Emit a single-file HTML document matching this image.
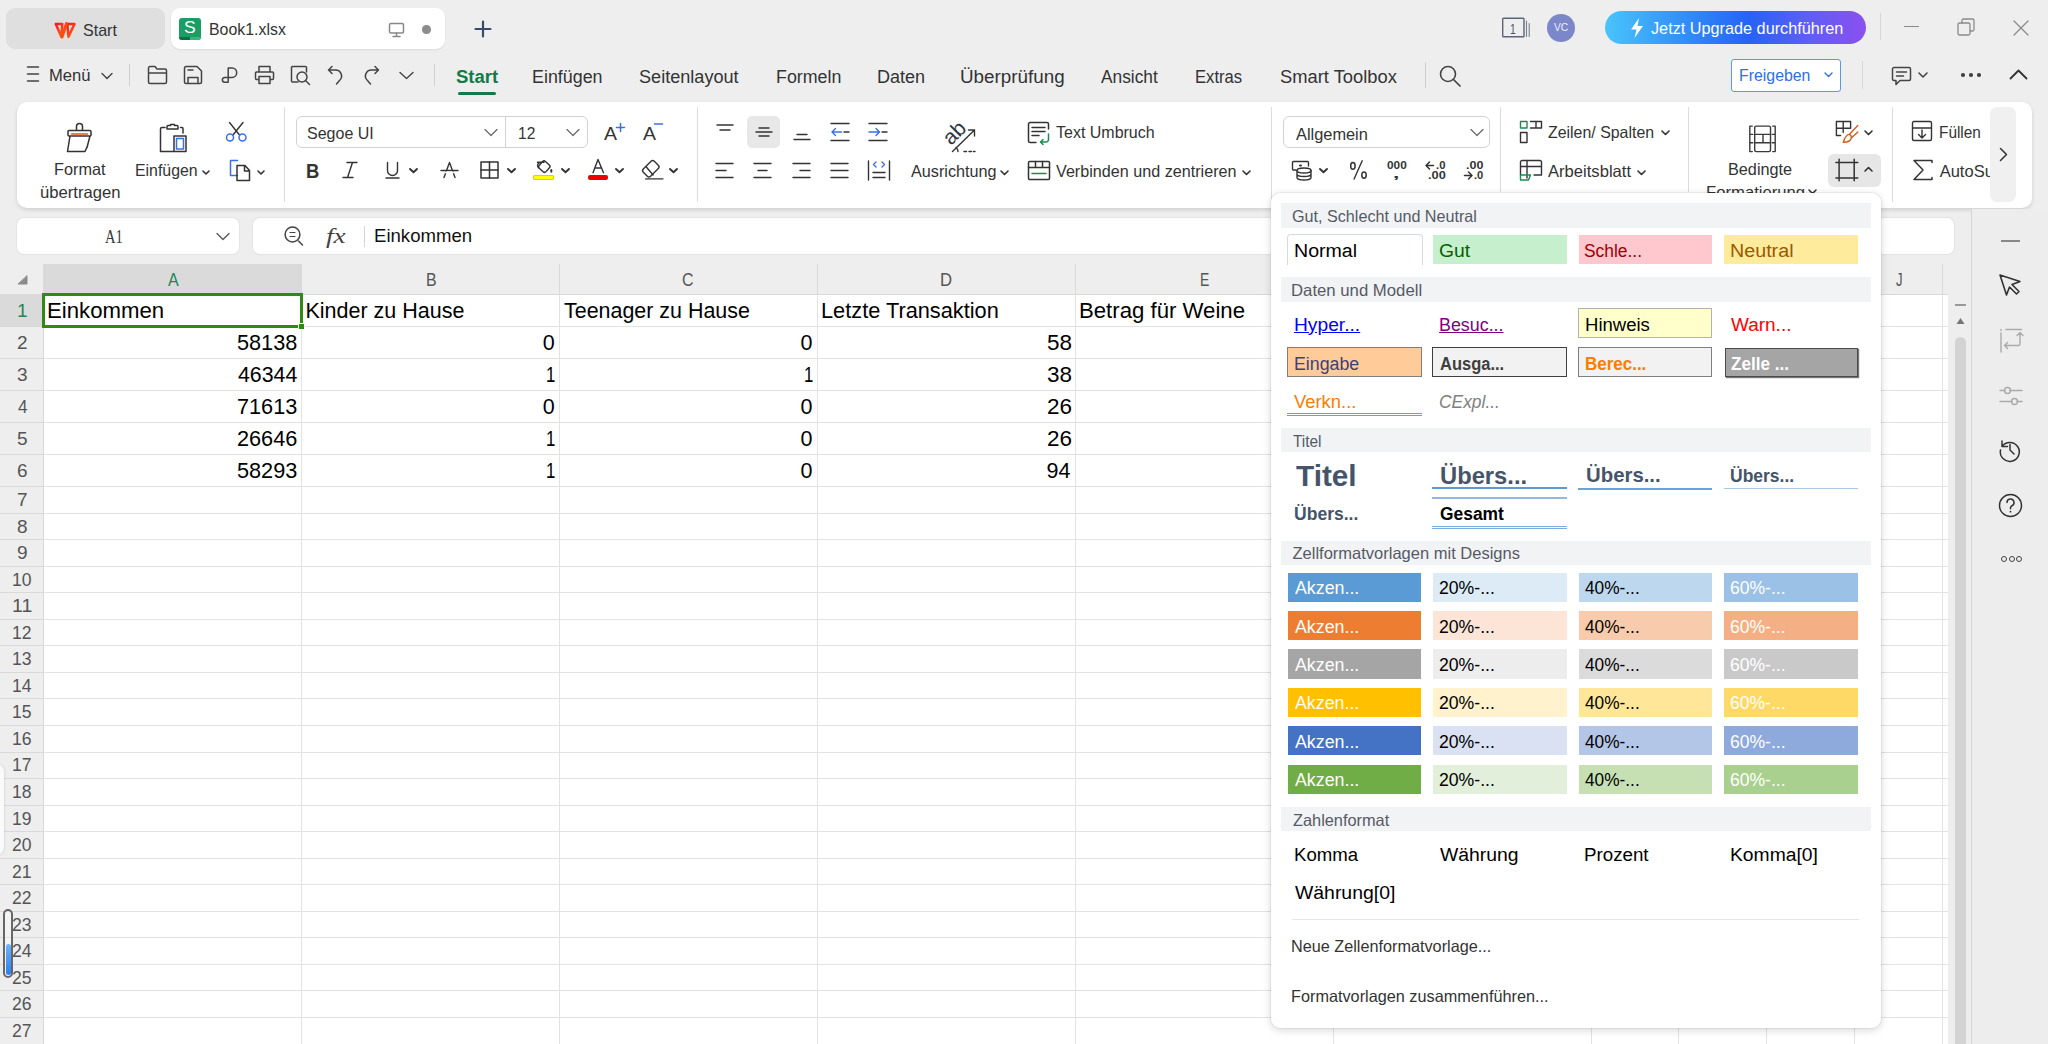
<!DOCTYPE html>
<html><head><meta charset="utf-8"><style>
html,body{margin:0;padding:0;width:2048px;height:1044px;overflow:hidden;background:#eeeeee;position:relative;font-family:"Liberation Sans",sans-serif;}
.t{position:absolute;white-space:nowrap;line-height:1;transform-origin:0 0;}
svg{overflow:visible}
</style></head><body>
<div style="position:absolute;left:6px;top:8px;width:159px;height:41px;background:#dfdfdf;border-radius:9px;"></div>
<svg style="position:absolute;left:53px;top:21px" width="25" height="19" viewBox="0 0 25 19">
<defs><linearGradient id="wg" x1="0" y1="0" x2="0.6" y2="1"><stop offset="0" stop-color="#ff1620"/><stop offset="1" stop-color="#ff5a10"/></linearGradient>
<linearGradient id="wg2" x1="0" y1="0" x2="1" y2="0"><stop offset="0" stop-color="#ff7a10"/><stop offset="0.5" stop-color="#c8240e"/><stop offset="1" stop-color="#ff3a18"/></linearGradient></defs>
<path d="M2.8 3 H9.3 L8.3 15.8 Z" fill="none" stroke="url(#wg)" stroke-width="2.5" stroke-linejoin="round"/>
<path d="M14.3 3 H21.5 L15.5 15.8 Z" fill="none" stroke="url(#wg)" stroke-width="2.5" stroke-linejoin="round"/>
<path d="M13.5 2.5 L9 16" stroke="#ff4a12" stroke-width="3" stroke-linecap="round"/>
<path d="M14.3 3 H21.5" stroke="url(#wg2)" stroke-width="3" stroke-linecap="round"/>
</svg>
<span id="t0" class="t" style="left:83.06px;top:21.91px;font-size:17px;color:#333;font-weight:normal;font-style:normal;font-family:'Liberation Sans', sans-serif;transform:scaleX(0.9429);">Start</span>
<div style="position:absolute;left:171px;top:8px;width:274px;height:41px;background:#ffffff;border-radius:9px;box-shadow:0 1px 2px rgba(0,0,0,0.08);"></div>
<div style="position:absolute;left:179px;top:18px;width:22px;height:22px;background:#1b9e63;border-radius:3px;"></div>
<div style="position:absolute;left:179px;top:37px;width:11px;height:3px;background:#0e7145;border-radius:0 0 0 3px;"></div>
<div style="position:absolute;left:190px;top:37px;width:11px;height:3px;background:#3ab57c;border-radius:0 0 3px 0;"></div>
<span id="t1" class="t" style="left:184.47px;top:18.91px;font-size:17px;color:#ffffff;font-weight:normal;font-style:normal;font-family:'Liberation Sans', sans-serif;transform:scaleX(1.0300);">S</span>
<span id="t2" class="t" style="left:208.87px;top:21.11px;font-size:17px;color:#333;font-weight:normal;font-style:normal;font-family:'Liberation Sans', sans-serif;transform:scaleX(0.9346);">Book1.xlsx</span>
<svg style="position:absolute;left:388px;top:22px;" width="18" height="16" viewBox="0 0 18 16" fill="none" stroke="#333" stroke-width="1.5" stroke-linecap="round" stroke-linejoin="round"><rect x="1.5" y="1.5" width="14" height="9.5" rx="1.5" stroke="#888"/><path d="M8.5 11v3.5M5 14.5h7" stroke="#888"/></svg>
<div style="position:absolute;left:422px;top:25px;width:8.5px;height:8.5px;background:#8c8c8c;border-radius:50%;"></div>
<svg style="position:absolute;left:474px;top:20px;" width="18" height="18" viewBox="0 0 18 18" fill="none" stroke="#333" stroke-width="1.5" stroke-linecap="round" stroke-linejoin="round"><path d="M9 1.5v15M1.5 9h15" stroke="#3b4a6b" stroke-width="2.2"/></svg>
<svg style="position:absolute;left:1501px;top:17px;" width="31" height="21" viewBox="0 0 31 21" fill="none" stroke="#333" stroke-width="1.5" stroke-linecap="round" stroke-linejoin="round"><rect x="1.7" y="1.2" width="21.3" height="18.6" rx="0.8" stroke="#5b6478" stroke-width="1.4"/><path d="M25.5 4v15.5M28.2 6.5v13" stroke="#7a8290" stroke-width="1.1"/></svg>
<span id="t3" class="t" style="left:1510.11px;top:20.50px;font-size:15px;color:#4a5263;font-weight:normal;font-style:normal;font-family:'Liberation Sans', sans-serif;transform:scaleX(0.6857);">1</span>
<div style="position:absolute;left:1547px;top:13.5px;width:28px;height:28px;background:#7b87c8;border-radius:50%;"></div>
<span id="t4" class="t" style="left:1554.00px;top:21.69px;font-size:11px;color:#eef;font-weight:normal;font-style:normal;font-family:'Liberation Sans', sans-serif;transform:scaleX(0.9333);">VC</span>
<div style="position:absolute;left:1605px;top:11px;width:261px;height:33px;background:linear-gradient(90deg,#49c4fb 0%,#2f86f8 35%,#2563f5 55%,#5f5ef3 78%,#8b50f0 100%);border-radius:17px;"></div>
<svg style="position:absolute;left:1628px;top:17px;" width="18" height="22" viewBox="0 0 18 22" fill="none" stroke="#333" stroke-width="1.5" stroke-linecap="round" stroke-linejoin="round"><path d="M11 1 L3 12.5 L8.5 12.5 L6.5 21 L15 9 L9.5 9 Z" fill="#fff" stroke="none"/></svg>
<span id="t5" class="t" style="left:1650.80px;top:19.61px;font-size:17px;color:#ffffff;font-weight:normal;font-style:normal;font-family:'Liberation Sans', sans-serif;transform:scaleX(0.9552);">Jetzt Upgrade durchführen</span>
<div style="position:absolute;left:1880px;top:13px;width:1px;height:27px;background:#d6d6d6;"></div>
<div style="position:absolute;left:1904px;top:26.2px;width:15px;height:1.3px;background:#8a8a8a;"></div>
<svg style="position:absolute;left:1957px;top:18px;" width="19" height="19" viewBox="0 0 19 19" fill="none" stroke="#333" stroke-width="1.5" stroke-linecap="round" stroke-linejoin="round"><rect x="1" y="5" width="12" height="12" rx="1.5" stroke="#8a8a8a" stroke-width="1.3"/><path d="M5 5V2.5A1.5 1.5 0 0 1 6.5 1h9A1.5 1.5 0 0 1 17 2.5v9a1.5 1.5 0 0 1-1.5 1.5H13" stroke="#8a8a8a" stroke-width="1.3"/></svg>
<svg style="position:absolute;left:2013px;top:20px;" width="16" height="16" viewBox="0 0 16 16" fill="none" stroke="#333" stroke-width="1.5" stroke-linecap="round" stroke-linejoin="round"><path d="M1 1L15 15M15 1L1 15" stroke="#8a8a8a" stroke-width="1.3"/></svg>
<svg style="position:absolute;left:26px;top:65px;" width="14" height="18" viewBox="0 0 14 18" fill="none" stroke="#333" stroke-width="1.5" stroke-linecap="round" stroke-linejoin="round"><path d="M1.5 2h11M1.5 9h11M1.5 16h11" stroke="#444" stroke-width="1.5"/></svg>
<span id="t6" class="t" style="left:49.02px;top:66.81px;font-size:17px;color:#333;font-weight:normal;font-style:normal;font-family:'Liberation Sans', sans-serif;transform:scaleX(0.9756);">Menü</span>
<svg style="position:absolute;left:101px;top:72px;" width="12" height="8" viewBox="0 0 12 8" fill="none" stroke="#333" stroke-width="1.5" stroke-linecap="round" stroke-linejoin="round"><path d="M1 1.5L6 6.5L11 1.5" stroke="#444" stroke-width="1.4"/></svg>
<div style="position:absolute;left:129px;top:64px;width:1px;height:22px;background:#d0d0d0;"></div>
<svg style="position:absolute;left:147px;top:65px;" width="21" height="20" viewBox="0 0 21 20" fill="none" stroke="#333" stroke-width="1.5" stroke-linecap="round" stroke-linejoin="round"><path d="M1.5 3A1.5 1.5 0 0 1 3 1.5h5l2 2.5h8A1.5 1.5 0 0 1 19.5 5.5V17A1.5 1.5 0 0 1 18 18.5H3A1.5 1.5 0 0 1 1.5 17Z M1.5 8h18" stroke="#444"/></svg>
<svg style="position:absolute;left:183px;top:65px;" width="20" height="20" viewBox="0 0 20 20" fill="none" stroke="#333" stroke-width="1.5" stroke-linecap="round" stroke-linejoin="round"><path d="M1.5 3A1.5 1.5 0 0 1 3 1.5h11l4.5 4.5V17a1.5 1.5 0 0 1-1.5 1.5H3A1.5 1.5 0 0 1 1.5 17Z M5 5h5 M5 18.5v-6h10v6" stroke="#444"/></svg>
<svg style="position:absolute;left:221px;top:65px;" width="17" height="20" viewBox="0 0 17 20" fill="none" stroke="#333" stroke-width="1.5" stroke-linecap="round" stroke-linejoin="round"><path d="M7.2 17.3V3H11A4.7 4.7 0 0 1 11 12.4H3.8A2.45 2.45 0 0 0 3.8 17.3H7.2" stroke="#444" stroke-width="1.5"/></svg>
<svg style="position:absolute;left:254px;top:65px;" width="21" height="20" viewBox="0 0 21 20" fill="none" stroke="#333" stroke-width="1.5" stroke-linecap="round" stroke-linejoin="round"><path d="M5 7V1.5h11V7 M5 14.5H2.5A1 1 0 0 1 1.5 13.5V8A1 1 0 0 1 2.5 7h16A1 1 0 0 1 19.5 8v5.5a1 1 0 0 1-1 1H16 M5 11.5h11v7H5Z" stroke="#444"/></svg>
<svg style="position:absolute;left:290px;top:65px;" width="21" height="21" viewBox="0 0 21 21" fill="none" stroke="#333" stroke-width="1.5" stroke-linecap="round" stroke-linejoin="round"><path d="M8 17H2.5A1 1 0 0 1 1.5 16V2.5A1 1 0 0 1 2.5 1.5h13a1 1 0 0 1 1 1V7" stroke="#444"/><circle cx="12" cy="12" r="5" stroke="#444"/><path d="M15.5 15.5L19.5 19.5" stroke="#444"/></svg>
<svg style="position:absolute;left:327px;top:65px;" width="16" height="20" viewBox="0 0 16 20" fill="none" stroke="#333" stroke-width="1.5" stroke-linecap="round" stroke-linejoin="round"><path d="M5 1.5L1.5 5L5 8.5 M1.5 5h7a6 6 0 0 1 4 10.5L9.5 19" stroke="#444"/></svg>
<svg style="position:absolute;left:364px;top:65px;" width="16" height="20" viewBox="0 0 16 20" fill="none" stroke="#333" stroke-width="1.5" stroke-linecap="round" stroke-linejoin="round"><path d="M11 1.5L14.5 5L11 8.5 M14.5 5h-7a6 6 0 0 0-4 10.5L6.5 19" stroke="#444"/></svg>
<svg style="position:absolute;left:399px;top:71px;" width="15" height="9" viewBox="0 0 15 9" fill="none" stroke="#333" stroke-width="1.5" stroke-linecap="round" stroke-linejoin="round"><path d="M1 1.5L7.5 7.5L14 1.5" stroke="#444" stroke-width="1.4"/></svg>
<div style="position:absolute;left:434px;top:64px;width:1px;height:22px;background:#d0d0d0;"></div>
<span id="t7" class="t" style="left:455.90px;top:69.19px;font-size:17.5px;color:#137b4a;font-weight:bold;font-style:normal;font-family:'Liberation Sans', sans-serif;transform:scaleX(1.0575);">Start</span>
<div style="position:absolute;left:458px;top:91.5px;width:38px;height:3px;background:#137b4a;border-radius:2px;"></div>
<span id="t8" class="t" style="left:531.78px;top:69.19px;font-size:17.5px;color:#333;font-weight:normal;font-style:normal;font-family:'Liberation Sans', sans-serif;transform:scaleX(1.0209);">Einfügen</span>
<span id="t9" class="t" style="left:639.27px;top:69.19px;font-size:17.5px;color:#333;font-weight:normal;font-style:normal;font-family:'Liberation Sans', sans-serif;transform:scaleX(1.0344);">Seitenlayout</span>
<span id="t10" class="t" style="left:776.48px;top:69.19px;font-size:17.5px;color:#333;font-weight:normal;font-style:normal;font-family:'Liberation Sans', sans-serif;transform:scaleX(1.0190);">Formeln</span>
<span id="t11" class="t" style="left:876.77px;top:69.19px;font-size:17.5px;color:#333;font-weight:normal;font-style:normal;font-family:'Liberation Sans', sans-serif;transform:scaleX(1.0311);">Daten</span>
<span id="t12" class="t" style="left:959.72px;top:69.19px;font-size:17.5px;color:#333;font-weight:normal;font-style:normal;font-family:'Liberation Sans', sans-serif;transform:scaleX(1.0758);">Überprüfung</span>
<span id="t13" class="t" style="left:1101.00px;top:69.19px;font-size:17.5px;color:#333;font-weight:normal;font-style:normal;font-family:'Liberation Sans', sans-serif;transform:scaleX(0.9897);">Ansicht</span>
<span id="t14" class="t" style="left:1195.45px;top:69.19px;font-size:17.5px;color:#333;font-weight:normal;font-style:normal;font-family:'Liberation Sans', sans-serif;transform:scaleX(0.9500);">Extras</span>
<span id="t15" class="t" style="left:1279.95px;top:69.19px;font-size:17.5px;color:#333;font-weight:normal;font-style:normal;font-family:'Liberation Sans', sans-serif;transform:scaleX(1.0482);">Smart Toolbox</span>
<div style="position:absolute;left:1425px;top:62px;width:1px;height:26px;background:#d0d0d0;"></div>
<svg style="position:absolute;left:1439px;top:65px;" width="23" height="22" viewBox="0 0 23 22" fill="none" stroke="#333" stroke-width="1.5" stroke-linecap="round" stroke-linejoin="round"><circle cx="9" cy="9" r="7.5" stroke="#444" stroke-width="1.6"/><path d="M14.5 14.5L21 21" stroke="#444" stroke-width="1.7"/></svg>
<div style="position:absolute;left:1731px;top:58.5px;width:110px;height:33px;background:#fff;border:1.5px solid #5b96f2;border-radius:3px;box-sizing:border-box;"></div>
<span id="t16" class="t" style="left:1739.07px;top:67.11px;font-size:17px;color:#2f6fe6;font-weight:normal;font-style:normal;font-family:'Liberation Sans', sans-serif;transform:scaleX(0.9333);">Freigeben</span>
<svg style="position:absolute;left:1824px;top:72px;" width="9" height="6" viewBox="0 0 9 6" fill="none" stroke="#333" stroke-width="1.5" stroke-linecap="round" stroke-linejoin="round"><path d="M1 1L4.5 4.5L8 1" stroke="#2f6fe6" stroke-width="1.4"/></svg>
<div style="position:absolute;left:1862px;top:61px;width:1px;height:28px;background:#d6d6d6;"></div>
<svg style="position:absolute;left:1891px;top:66px;" width="21" height="20" viewBox="0 0 21 20" fill="none" stroke="#333" stroke-width="1.5" stroke-linecap="round" stroke-linejoin="round"><path d="M3 1.5h15A1.5 1.5 0 0 1 19.5 3v10A1.5 1.5 0 0 1 18 14.5h-9l-4 4v-4H3A1.5 1.5 0 0 1 1.5 13V3A1.5 1.5 0 0 1 3 1.5Z M5.5 6h10M5.5 10h7" stroke="#444" stroke-width="1.5"/></svg>
<svg style="position:absolute;left:1918px;top:72px;" width="10" height="7" viewBox="0 0 10 7" fill="none" stroke="#333" stroke-width="1.5" stroke-linecap="round" stroke-linejoin="round"><path d="M1 1L5 5L9 1" stroke="#444" stroke-width="1.6"/></svg>
<div style="position:absolute;left:1961px;top:73px;width:3.5px;height:3.5px;background:#444;border-radius:50%;"></div>
<div style="position:absolute;left:1969px;top:73px;width:3.5px;height:3.5px;background:#444;border-radius:50%;"></div>
<div style="position:absolute;left:1977px;top:73px;width:3.5px;height:3.5px;background:#444;border-radius:50%;"></div>
<svg style="position:absolute;left:2009px;top:69px;" width="19" height="11" viewBox="0 0 19 11" fill="none" stroke="#333" stroke-width="1.5" stroke-linecap="round" stroke-linejoin="round"><path d="M1.5 9.5L9.5 1.5L17.5 9.5" stroke="#333" stroke-width="1.8"/></svg>
<div style="position:absolute;left:17px;top:101.5px;width:2015px;height:106px;background:#fff;border-radius:10px;box-shadow:0 2px 4px rgba(0,0,0,0.13);"></div>
<svg style="position:absolute;left:66px;top:123px;" width="27" height="30" viewBox="0 0 27 30" fill="none" stroke="#333" stroke-width="1.5" stroke-linecap="round" stroke-linejoin="round"><path d="M10.5 7.5V3.5a3 3 0 0 1 6 0v4 M3 7.5h21a1 1 0 0 1 1 1V12a1 1 0 0 1-1 1H3a1 1 0 0 1-1-1V8.5a1 1 0 0 1 1-1Z M4 13L1.5 28.5h17.5l2-4.5 M24 13l-3 11.5" stroke="#333" stroke-width="1.5"/><path d="M5.5 11h16" stroke="#e0581e" stroke-width="1.5"/></svg>
<span id="t17" class="t" style="left:53.51px;top:160.83px;font-size:16.5px;color:#333;font-weight:normal;font-style:normal;font-family:'Liberation Sans', sans-serif;transform:scaleX(0.9865);">Format</span>
<span id="t18" class="t" style="left:39.69px;top:183.53px;font-size:16.5px;color:#333;font-weight:normal;font-style:normal;font-family:'Liberation Sans', sans-serif;transform:scaleX(1.0090);">übertragen</span>
<svg style="position:absolute;left:159px;top:123px;" width="29" height="30" viewBox="0 0 29 30" fill="none" stroke="#333" stroke-width="1.5" stroke-linecap="round" stroke-linejoin="round"><path d="M6 4.5H3a1.5 1.5 0 0 0-1.5 1.5v22.5h13 M21.5 4.5H23a1 1 0 0 1 1 1V10 M8 6V3.5a1 1 0 0 1 1-1h2.5V1.5h4v1h2.5a1 1 0 0 1 1 1V6Z M15 28.5V13h12v15.5Z" stroke="#333" stroke-width="1.5"/><path d="M17.5 15.5h7v10.5h-7Z" stroke="#3b6fe6" stroke-width="1.5"/></svg>
<span id="t19" class="t" style="left:134.54px;top:162.33px;font-size:16.5px;color:#333;font-weight:normal;font-style:normal;font-family:'Liberation Sans', sans-serif;transform:scaleX(0.9609);">Einfügen</span>
<svg style="position:absolute;left:202px;top:170px;" width="8" height="6" viewBox="0 0 8 6" fill="none" stroke="#333" stroke-width="1.5" stroke-linecap="round" stroke-linejoin="round"><path d="M1 1L4 4L7 1" stroke="#333" stroke-width="1.6"/></svg>
<svg style="position:absolute;left:225px;top:121px;" width="23" height="21" viewBox="0 0 23 21" fill="none" stroke="#333" stroke-width="1.5" stroke-linecap="round" stroke-linejoin="round"><path d="M4.5 1.5L14.5 14 M18 1.5L8 14" stroke="#333" stroke-width="1.4"/><circle cx="5" cy="16.5" r="3.5" stroke="#3b6fe6" stroke-width="1.5"/><circle cx="17.5" cy="16.5" r="3.5" stroke="#3b6fe6" stroke-width="1.5"/></svg>
<svg style="position:absolute;left:228px;top:159px;" width="23" height="23" viewBox="0 0 23 23" fill="none" stroke="#333" stroke-width="1.5" stroke-linecap="round" stroke-linejoin="round"><path d="M9.5 1.5h-7v15h7" stroke="#3b6fe6" stroke-width="1.5"/><path d="M9 6.5h8l4.5 5v10H9Z M16.5 6.5v5.5h5" stroke="#333" stroke-width="1.5"/></svg>
<svg style="position:absolute;left:257px;top:170px;" width="8" height="6" viewBox="0 0 8 6" fill="none" stroke="#333" stroke-width="1.5" stroke-linecap="round" stroke-linejoin="round"><path d="M1 1L4 4L7 1" stroke="#333" stroke-width="1.6"/></svg>
<div style="position:absolute;left:284px;top:107px;width:1px;height:95px;background:#dcdcdc;"></div>
<div style="position:absolute;left:296px;top:115.5px;width:292px;height:32px;border:1px solid #d3d3d3;border-radius:6px;box-sizing:border-box;background:#fff;"></div>
<div style="position:absolute;left:504.5px;top:116px;width:1px;height:31px;background:#d3d3d3;"></div>
<span id="t20" class="t" style="left:306.73px;top:125.23px;font-size:16.5px;color:#333;font-weight:normal;font-style:normal;font-family:'Liberation Sans', sans-serif;transform:scaleX(0.9701);">Segoe UI</span>
<svg style="position:absolute;left:484px;top:128px;" width="14" height="9" viewBox="0 0 14 9" fill="none" stroke="#333" stroke-width="1.5" stroke-linecap="round" stroke-linejoin="round"><path d="M1 1.5L7 7.5L13 1.5" stroke="#666" stroke-width="1.2"/></svg>
<span id="t21" class="t" style="left:518.06px;top:125.23px;font-size:16.5px;color:#333;font-weight:normal;font-style:normal;font-family:'Liberation Sans', sans-serif;transform:scaleX(0.9412);">12</span>
<svg style="position:absolute;left:566px;top:128px;" width="14" height="9" viewBox="0 0 14 9" fill="none" stroke="#333" stroke-width="1.5" stroke-linecap="round" stroke-linejoin="round"><path d="M1 1.5L7 7.5L13 1.5" stroke="#666" stroke-width="1.2"/></svg>
<span id="t22" class="t" style="left:604.00px;top:124.76px;font-size:18px;color:#333;font-weight:normal;font-style:normal;font-family:'Liberation Sans', sans-serif;transform:scaleX(1.0833);">A</span>
<svg style="position:absolute;left:616px;top:123px;" width="9" height="9" viewBox="0 0 9 9" fill="none" stroke="#333" stroke-width="1.5" stroke-linecap="round" stroke-linejoin="round"><path d="M4.5 0.5v8M0.5 4.5h8" stroke="#3b6fe6" stroke-width="1.5"/></svg>
<span id="t23" class="t" style="left:643.00px;top:124.76px;font-size:18px;color:#333;font-weight:normal;font-style:normal;font-family:'Liberation Sans', sans-serif;transform:scaleX(1.0833);">A</span>
<svg style="position:absolute;left:654px;top:123px;" width="9" height="3" viewBox="0 0 9 3" fill="none" stroke="#333" stroke-width="1.5" stroke-linecap="round" stroke-linejoin="round"><path d="M0.5 1h8" stroke="#3b6fe6" stroke-width="1.5"/></svg>
<span id="t24" class="t" style="left:305.82px;top:159.72px;font-size:21px;color:#333;font-weight:bold;font-style:normal;font-family:'Liberation Sans', sans-serif;transform:scaleX(0.8786);">B</span>
<svg style="position:absolute;left:341px;top:161px;" width="18" height="18" viewBox="0 0 18 18" fill="none" stroke="#333" stroke-width="1.5" stroke-linecap="round" stroke-linejoin="round"><path d="M6 1.5h10 M2 16.5h10 M11.5 1.5L6.5 16.5" stroke="#333" stroke-width="1.4"/></svg>
<svg style="position:absolute;left:385px;top:161px;" width="15" height="18" viewBox="0 0 15 18" fill="none" stroke="#333" stroke-width="1.5" stroke-linecap="round" stroke-linejoin="round"><path d="M2.5 1.5v8a5 5 0 0 0 10 0v-8 M1 17h13" stroke="#333" stroke-width="1.4"/></svg>
<svg style="position:absolute;left:409px;top:167.8px;" width="9" height="6" viewBox="0 0 9 6" fill="none" stroke="#333" stroke-width="1.5" stroke-linecap="round" stroke-linejoin="round"><path d="M1 1L4.5 4.3L8 1" stroke="#333" stroke-width="1.9"/></svg>
<svg style="position:absolute;left:440px;top:161px;" width="19" height="18" viewBox="0 0 19 18" fill="none" stroke="#333" stroke-width="1.5" stroke-linecap="round" stroke-linejoin="round"><path d="M4 16.5L9.5 1.5L15 16.5 M1 9.5h17" stroke="#333" stroke-width="1.4"/><path d="M6 11.5h7" stroke="#fff" stroke-width="2"/></svg>
<svg style="position:absolute;left:480px;top:161px;" width="19" height="18" viewBox="0 0 19 18" fill="none" stroke="#333" stroke-width="1.5" stroke-linecap="round" stroke-linejoin="round"><rect x="1" y="1" width="17" height="16" stroke="#333" stroke-width="1.5"/><path d="M9.5 1v16M1 9h17" stroke="#333" stroke-width="1.5"/></svg>
<svg style="position:absolute;left:507px;top:167.8px;" width="9" height="6" viewBox="0 0 9 6" fill="none" stroke="#333" stroke-width="1.5" stroke-linecap="round" stroke-linejoin="round"><path d="M1 1L4.5 4.3L8 1" stroke="#333" stroke-width="1.9"/></svg>
<svg style="position:absolute;left:533px;top:157px;" width="22" height="17" viewBox="0 0 22 17" fill="none" stroke="#333" stroke-width="1.5" stroke-linecap="round" stroke-linejoin="round"><rect x="-4.6" y="-4.6" width="9.2" height="9.2" rx="2" transform="translate(11.3 9.6) rotate(42)" stroke="#333" stroke-width="1.4"/><path d="M4.5 5.3H11 M6.8 5.3C4.3 6.6 3.9 9.2 5.6 10.8" stroke="#333" stroke-width="1.4"/><ellipse cx="18.3" cy="13.8" rx="1.1" ry="1.9" fill="#333" stroke="none"/></svg>
<div style="position:absolute;left:533.2px;top:175px;width:20.7px;height:4.7px;background:#ffff00;border-radius:2px;box-shadow:inset 0 0 0 0.8px #c9c900;"></div>
<svg style="position:absolute;left:561px;top:167.8px;" width="9" height="6" viewBox="0 0 9 6" fill="none" stroke="#333" stroke-width="1.5" stroke-linecap="round" stroke-linejoin="round"><path d="M1 1L4.5 4.3L8 1" stroke="#333" stroke-width="1.9"/></svg>
<svg style="position:absolute;left:589px;top:158px;" width="18" height="16" viewBox="0 0 18 16" fill="none" stroke="#333" stroke-width="1.5" stroke-linecap="round" stroke-linejoin="round"><path d="M4 14.7L9 1.4L14.5 14.7 M6.4 10H12.1" stroke="#333" stroke-width="1.4"/></svg>
<div style="position:absolute;left:587.5px;top:175px;width:20.3px;height:4.7px;background:#ee0000;border-radius:2px;"></div>
<svg style="position:absolute;left:615px;top:167.8px;" width="9" height="6" viewBox="0 0 9 6" fill="none" stroke="#333" stroke-width="1.5" stroke-linecap="round" stroke-linejoin="round"><path d="M1 1L4.5 4.3L8 1" stroke="#333" stroke-width="1.9"/></svg>
<svg style="position:absolute;left:640px;top:158px;" width="24" height="22" viewBox="0 0 24 22" fill="none" stroke="#333" stroke-width="1.5" stroke-linecap="round" stroke-linejoin="round"><rect x="-7.75" y="-5.15" width="15.5" height="10.3" rx="2.3" transform="translate(10.8 10.75) rotate(-45)" stroke="#333" stroke-width="1.4"/><path d="M6.1 8.8L13.1 17 M5.7 20.9H22.9" stroke="#333" stroke-width="1.4"/></svg>
<svg style="position:absolute;left:669px;top:167.8px;" width="9" height="6" viewBox="0 0 9 6" fill="none" stroke="#333" stroke-width="1.5" stroke-linecap="round" stroke-linejoin="round"><path d="M1 1L4.5 4.3L8 1" stroke="#333" stroke-width="1.9"/></svg>
<div style="position:absolute;left:697px;top:107px;width:1px;height:95px;background:#dcdcdc;"></div>
<svg style="position:absolute;left:716px;top:124px;" width="18" height="7" viewBox="0 0 18 7" fill="none" stroke="#333" stroke-width="1.5" stroke-linecap="round" stroke-linejoin="round"><path d="M1 1h16M4 6h10" stroke="#333" stroke-width="1.4"/></svg>
<div style="position:absolute;left:747px;top:115.5px;width:33px;height:32px;background:#e8e8e8;border-radius:5px;"></div>
<svg style="position:absolute;left:755px;top:127px;" width="18" height="10" viewBox="0 0 18 10" fill="none" stroke="#333" stroke-width="1.5" stroke-linecap="round" stroke-linejoin="round"><path d="M4 1h10M1 5h16M4 9h10" stroke="#333" stroke-width="1.4"/></svg>
<svg style="position:absolute;left:793px;top:133px;" width="18" height="8" viewBox="0 0 18 8" fill="none" stroke="#333" stroke-width="1.5" stroke-linecap="round" stroke-linejoin="round"><path d="M4 1.5h10M1 6.5h16" stroke="#333" stroke-width="1.4"/></svg>
<svg style="position:absolute;left:830px;top:122px;" width="20" height="20" viewBox="0 0 20 20" fill="none" stroke="#333" stroke-width="1.5" stroke-linecap="round" stroke-linejoin="round"><path d="M1 1.5h18M1 18.5h18M14 10h5" stroke="#333" stroke-width="1.4"/><path d="M11.5 10H2 M5.5 6.5L2 10L5.5 13.5" stroke="#3b6fe6" stroke-width="1.4"/></svg>
<svg style="position:absolute;left:868px;top:122px;" width="20" height="20" viewBox="0 0 20 20" fill="none" stroke="#333" stroke-width="1.5" stroke-linecap="round" stroke-linejoin="round"><path d="M1 1.5h18M1 18.5h18M14 10h5" stroke="#333" stroke-width="1.4"/><path d="M1 10h10.5 M8 6.5L11.5 10L8 13.5" stroke="#3b6fe6" stroke-width="1.4"/></svg>
<svg style="position:absolute;left:944px;top:122px;overflow:visible" width="32" height="31" viewBox="0 0 32 31" fill="none" stroke="#333" stroke-width="1.4" stroke-linecap="round"><text x="0" y="0" transform="translate(7,24) rotate(-45)" font-family="Liberation Sans" font-size="21" fill="#2d3443" stroke="none">ab</text><path d="M8.5 29.5L30.5 8 M24.5 8h6v6 M20 29.5h2.5 M25 29.5h2.5 M29.5 29.5h1.5 M12 25.5a5 5 0 0 1 2 4"/></svg>
<svg style="position:absolute;left:715px;top:162px;" width="19" height="17" viewBox="0 0 19 17" fill="none" stroke="#333" stroke-width="1.5" stroke-linecap="round" stroke-linejoin="round"><path d="M1 1.5h17M1 8.5h10M1 15.5h17" stroke="#333" stroke-width="1.4"/></svg>
<svg style="position:absolute;left:753px;top:162px;" width="19" height="17" viewBox="0 0 19 17" fill="none" stroke="#333" stroke-width="1.5" stroke-linecap="round" stroke-linejoin="round"><path d="M1 1.5h17M5 8.5h9M1 15.5h17" stroke="#333" stroke-width="1.4"/></svg>
<svg style="position:absolute;left:792px;top:162px;" width="19" height="17" viewBox="0 0 19 17" fill="none" stroke="#333" stroke-width="1.5" stroke-linecap="round" stroke-linejoin="round"><path d="M1 1.5h17M8 8.5h10M1 15.5h17" stroke="#333" stroke-width="1.4"/></svg>
<svg style="position:absolute;left:830px;top:162px;" width="19" height="17" viewBox="0 0 19 17" fill="none" stroke="#333" stroke-width="1.5" stroke-linecap="round" stroke-linejoin="round"><path d="M1 1.5h17M1 8.5h17M1 15.5h17" stroke="#333" stroke-width="1.4"/></svg>
<svg style="position:absolute;left:867px;top:160px;" width="24" height="21" viewBox="0 0 24 21" fill="none" stroke="#333" stroke-width="1.5" stroke-linecap="round" stroke-linejoin="round"><path d="M1.5 1v19M22.5 1v19M6 12.5h12M6 17.5h12" stroke="#333" stroke-width="1.4"/><path d="M9 2L6.5 4.5L9 7 M15 2L17.5 4.5L15 7" stroke="#3b6fe6" stroke-width="1.4"/></svg>
<span id="t25" class="t" style="left:910.80px;top:162.73px;font-size:16.5px;color:#333;font-weight:normal;font-style:normal;font-family:'Liberation Sans', sans-serif;transform:scaleX(0.9828);">Ausrichtung</span>
<svg style="position:absolute;left:1000px;top:170px;" width="9" height="6" viewBox="0 0 9 6" fill="none" stroke="#333" stroke-width="1.5" stroke-linecap="round" stroke-linejoin="round"><path d="M1 1L4.5 4.5L8 1" stroke="#333" stroke-width="1.6"/></svg>
<svg style="position:absolute;left:1027px;top:121px;" width="24" height="23" viewBox="0 0 24 23" fill="none" stroke="#333" stroke-width="1.5" stroke-linecap="round" stroke-linejoin="round"><path d="M21.5 8V3a1.5 1.5 0 0 0-1.5-1.5H3A1.5 1.5 0 0 0 1.5 3v17A1.5 1.5 0 0 0 3 21.5h6" stroke="#333" stroke-width="1.5"/><path d="M5 6.5h13M5 10.5h13M5 14.5h7" stroke="#333" stroke-width="1.5"/><path d="M21.5 13v5.5a2.5 2.5 0 0 1-2.5 2.5h-5 M16 18.5l-2.5 2.5L16 23.5" stroke="#1e8a55" stroke-width="1.5"/></svg>
<span id="t26" class="t" style="left:1055.90px;top:124.23px;font-size:16.5px;color:#333;font-weight:normal;font-style:normal;font-family:'Liberation Sans', sans-serif;transform:scaleX(0.9693);">Text Umbruch</span>
<svg style="position:absolute;left:1027px;top:160px;" width="24" height="21" viewBox="0 0 24 21" fill="none" stroke="#333" stroke-width="1.5" stroke-linecap="round" stroke-linejoin="round"><rect x="1.5" y="1.5" width="21" height="18" rx="1" stroke="#333" stroke-width="1.5"/><path d="M1.5 7.5h21 M8.5 1.5v6 M15.5 1.5v6" stroke="#333" stroke-width="1.5"/><path d="M5 13.5h14" stroke="#1e8a55" stroke-width="1.5"/></svg>
<span id="t27" class="t" style="left:1055.90px;top:162.53px;font-size:16.5px;color:#333;font-weight:normal;font-style:normal;font-family:'Liberation Sans', sans-serif;transform:scaleX(0.9788);">Verbinden und zentrieren</span>
<svg style="position:absolute;left:1242px;top:170px;" width="9" height="6" viewBox="0 0 9 6" fill="none" stroke="#333" stroke-width="1.5" stroke-linecap="round" stroke-linejoin="round"><path d="M1 1L4.5 4.5L8 1" stroke="#333" stroke-width="1.6"/></svg>
<div style="position:absolute;left:1271px;top:107px;width:1px;height:95px;background:#dcdcdc;"></div>
<div style="position:absolute;left:1282.5px;top:115.5px;width:207px;height:32px;border:1px solid #d3d3d3;border-radius:6px;box-sizing:border-box;background:#fff;"></div>
<span id="t28" class="t" style="left:1295.60px;top:125.53px;font-size:16.5px;color:#333;font-weight:normal;font-style:normal;font-family:'Liberation Sans', sans-serif;transform:scaleX(0.9917);">Allgemein</span>
<svg style="position:absolute;left:1470px;top:128px;" width="14" height="9" viewBox="0 0 14 9" fill="none" stroke="#333" stroke-width="1.5" stroke-linecap="round" stroke-linejoin="round"><path d="M1 1.5L7 7.5L13 1.5" stroke="#666" stroke-width="1.2"/></svg>
<svg style="position:absolute;left:1291px;top:160px;" width="22" height="21" viewBox="0 0 22 21" fill="none" stroke="#333" stroke-width="1.5" stroke-linecap="round" stroke-linejoin="round"><path d="M5 10H2.5A1 1 0 0 1 1.5 9V2.5A1 1 0 0 1 2.5 1.5h14a1 1 0 0 1 1 1V6" stroke="#333" stroke-width="1.4"/><ellipse cx="13" cy="10.5" rx="7" ry="2.5" stroke="#333" stroke-width="1.4"/><path d="M6 10.5v7c0 1.4 3.1 2.5 7 2.5s7-1.1 7-2.5v-7 M6 14c0 1.4 3.1 2.5 7 2.5s7-1.1 7-2.5" stroke="#333" stroke-width="1.4"/><path d="M9 5.5h1" stroke="#333" stroke-width="2"/></svg>
<svg style="position:absolute;left:1319px;top:167.8px;" width="9" height="6" viewBox="0 0 9 6" fill="none" stroke="#333" stroke-width="1.5" stroke-linecap="round" stroke-linejoin="round"><path d="M1 1L4.5 4.3L8 1" stroke="#333" stroke-width="1.9"/></svg>
<svg style="position:absolute;left:1349px;top:160px;" width="20" height="21" viewBox="0 0 20 21" fill="none" stroke="#333" stroke-width="1.5" stroke-linecap="round" stroke-linejoin="round"><ellipse cx="3.9" cy="5.9" rx="2.2" ry="3.3" stroke="#333" stroke-width="1.5"/><path d="M13.2 0.8L5.1 19" stroke="#333" stroke-width="1.4"/><ellipse cx="15" cy="15.1" rx="2.2" ry="3.2" stroke="#333" stroke-width="1.5"/></svg>
<span id="t29" class="t" style="left:1387.00px;top:159.57px;font-size:11.5px;color:#333;font-weight:bold;font-style:normal;font-family:'Liberation Sans', sans-serif;transform:scaleX(1.0263);">000</span>
<span id="t30" class="t" style="left:1393.25px;top:166.50px;font-size:13px;color:#333;font-weight:bold;font-style:normal;font-family:'Liberation Sans', sans-serif;transform:scaleX(1.7500);">,</span>
<svg style="position:absolute;left:1425px;top:161px;" width="9" height="9" viewBox="0 0 9 9" fill="none" stroke="#333" stroke-width="1.5" stroke-linecap="round" stroke-linejoin="round"><path d="M8.5 4.5H1 M4.5 1L1 4.5L4.5 8" stroke="#333" stroke-width="1.5"/></svg>
<span id="t31" class="t" style="left:1435.50px;top:159.57px;font-size:11.5px;color:#333;font-weight:bold;font-style:normal;font-family:'Liberation Sans', sans-serif;transform:scaleX(0.9800);">.0</span>
<span id="t32" class="t" style="left:1427.50px;top:169.87px;font-size:11.5px;color:#333;font-weight:bold;font-style:normal;font-family:'Liberation Sans', sans-serif;transform:scaleX(1.1125);">.00</span>
<span id="t33" class="t" style="left:1466.30px;top:159.57px;font-size:11.5px;color:#333;font-weight:bold;font-style:normal;font-family:'Liberation Sans', sans-serif;transform:scaleX(1.0875);">.00</span>
<svg style="position:absolute;left:1464px;top:171px;" width="9" height="9" viewBox="0 0 9 9" fill="none" stroke="#333" stroke-width="1.5" stroke-linecap="round" stroke-linejoin="round"><path d="M0.5 4.5H8 M4.5 1L8 4.5L4.5 8" stroke="#333" stroke-width="1.5"/></svg>
<span id="t34" class="t" style="left:1474.00px;top:169.87px;font-size:11.5px;color:#333;font-weight:bold;font-style:normal;font-family:'Liberation Sans', sans-serif;transform:scaleX(0.9700);">.0</span>
<div style="position:absolute;left:1500px;top:107px;width:1px;height:85px;background:#dcdcdc;"></div>
<svg style="position:absolute;left:1519px;top:120px;" width="25" height="24" viewBox="0 0 25 24" fill="none" stroke="#333" stroke-width="1.5" stroke-linecap="round" stroke-linejoin="round"><rect x="1.5" y="1.5" width="6.5" height="6.5" stroke="#1e8a55" stroke-width="1.4"/><path d="M1.5 12.5h6.5v10H1.5Z M11.5 1.5h11v6.5h-11 M17 1.5v6.5" stroke="#333" stroke-width="1.4"/></svg>
<span id="t35" class="t" style="left:1548.00px;top:124.43px;font-size:16.5px;color:#333;font-weight:normal;font-style:normal;font-family:'Liberation Sans', sans-serif;transform:scaleX(0.9636);">Zeilen/ Spalten</span>
<svg style="position:absolute;left:1661px;top:130px;" width="9" height="6" viewBox="0 0 9 6" fill="none" stroke="#333" stroke-width="1.5" stroke-linecap="round" stroke-linejoin="round"><path d="M1 1L4.5 4.5L8 1" stroke="#333" stroke-width="1.6"/></svg>
<svg style="position:absolute;left:1519px;top:159px;" width="25" height="23" viewBox="0 0 25 23" fill="none" stroke="#333" stroke-width="1.5" stroke-linecap="round" stroke-linejoin="round"><path d="M22.5 16V3a1.5 1.5 0 0 0-1.5-1.5H3A1.5 1.5 0 0 0 1.5 3v13 M1.5 7.5h21 M8 1.5v17.5 M15 16h7.5" stroke="#333" stroke-width="1.4"/><path d="M1.5 16h10l-2 5H1.5Z" stroke="#1e8a55" stroke-width="1.4"/></svg>
<span id="t36" class="t" style="left:1548.00px;top:163.03px;font-size:16.5px;color:#333;font-weight:normal;font-style:normal;font-family:'Liberation Sans', sans-serif;transform:scaleX(1.0060);">Arbeitsblatt</span>
<svg style="position:absolute;left:1637px;top:170px;" width="9" height="6" viewBox="0 0 9 6" fill="none" stroke="#333" stroke-width="1.5" stroke-linecap="round" stroke-linejoin="round"><path d="M1 1L4.5 4.5L8 1" stroke="#333" stroke-width="1.6"/></svg>
<div style="position:absolute;left:1688px;top:107px;width:1px;height:85px;background:#dcdcdc;"></div>
<svg style="position:absolute;left:1748px;top:125px;" width="29" height="28" viewBox="0 0 29 28" fill="none" stroke="#333" stroke-width="1.5" stroke-linecap="round" stroke-linejoin="round"><path d="M4.3 1.1H1.8V26.6H4.3 M1.8 9.4H4.8 M1.8 17.7H4.8 M24.7 1.1H27.2V26.6H24.7 M27.2 9.4H24.2 M27.2 17.7H24.2 M8.2 1.1H21A1.5 1.5 0 0 1 22.5 2.6V25.1A1.5 1.5 0 0 1 21 26.6H8.2A1.5 1.5 0 0 1 6.7 25.1V2.6A1.5 1.5 0 0 1 8.2 1.1Z M6.7 9.4H22.5 M6.7 17.7H22.5 M15 9.4V17.7" stroke="#3a3a3a" stroke-width="1.4"/></svg>
<span id="t37" class="t" style="left:1728.02px;top:160.53px;font-size:16.5px;color:#333;font-weight:normal;font-style:normal;font-family:'Liberation Sans', sans-serif;transform:scaleX(0.9844);">Bedingte</span>
<span id="t38" class="t" style="left:1705.99px;top:183.53px;font-size:16.5px;color:#333;font-weight:normal;font-style:normal;font-family:'Liberation Sans', sans-serif;transform:scaleX(1.0103);">Formatierung</span>
<svg style="position:absolute;left:1808px;top:189px;" width="9" height="6" viewBox="0 0 9 6" fill="none" stroke="#333" stroke-width="1.5" stroke-linecap="round" stroke-linejoin="round"><path d="M1 1L4.5 4.5L8 1" stroke="#333" stroke-width="1.6"/></svg>
<svg style="position:absolute;left:1834px;top:119px;" width="26" height="26" viewBox="0 0 26 26" fill="none" stroke="#333" stroke-width="1.5" stroke-linecap="round" stroke-linejoin="round"><path d="M2.4 16.5V2.5H16.6V9.3H2.4 M9.2 2.5V13.6 M2.4 16.5H6.6" stroke="#333" stroke-width="1.4"/><path d="M23.8 6.4L15.2 15.4 M23.8 12.9L17.3 19 M15.2 15.4C12 15.5 10.5 19.5 9.3 23.3C13 23.3 16.5 22.5 17.3 19C17.5 17 16.5 15.8 15.2 15.4Z" stroke="#d2601e" stroke-width="1.4"/></svg>
<svg style="position:absolute;left:1864px;top:130px;" width="9" height="6" viewBox="0 0 9 6" fill="none" stroke="#333" stroke-width="1.5" stroke-linecap="round" stroke-linejoin="round"><path d="M1 1L4.5 4.5L8 1" stroke="#333" stroke-width="1.6"/></svg>
<div style="position:absolute;left:1828px;top:154px;width:53px;height:32.5px;background:#e6e6e6;border-radius:6px;"></div>
<svg style="position:absolute;left:1835px;top:158px;" width="24" height="24" viewBox="0 0 24 24" fill="none" stroke="#333" stroke-width="1.5" stroke-linecap="round" stroke-linejoin="round"><path d="M4.1 1.2V22.7 M19.2 1.2V22.7 M0.9 4.4H22.8 M0.9 19.9H22.8" stroke="#333" stroke-width="1.5"/></svg>
<svg style="position:absolute;left:1864px;top:166px;" width="9" height="6" viewBox="0 0 9 6" fill="none" stroke="#333" stroke-width="1.5" stroke-linecap="round" stroke-linejoin="round"><path d="M1 5L4.5 1.5L8 5" stroke="#333" stroke-width="1.6"/></svg>
<div style="position:absolute;left:1892px;top:107px;width:1px;height:95px;background:#dcdcdc;"></div>
<svg style="position:absolute;left:1911px;top:120px;" width="23" height="22" viewBox="0 0 23 22" fill="none" stroke="#333" stroke-width="1.5" stroke-linecap="round" stroke-linejoin="round"><path d="M1.5 8V3a1.5 1.5 0 0 1 1.5-1.5h16A1.5 1.5 0 0 1 20.5 3v5 M1.5 8h19 M1.5 8v11A1.5 1.5 0 0 0 3 20.5h16a1.5 1.5 0 0 0 1.5-1.5V8 M11 10v8 M7.5 14.5L11 18L14.5 14.5" stroke="#333" stroke-width="1.4"/></svg>
<span id="t39" class="t" style="left:1939.07px;top:124.23px;font-size:16.5px;color:#333;font-weight:normal;font-style:normal;font-family:'Liberation Sans', sans-serif;transform:scaleX(0.9302);">Füllen</span>
<svg style="position:absolute;left:1912px;top:159px;" width="22" height="22" viewBox="0 0 22 22" fill="none" stroke="#333" stroke-width="1.5" stroke-linecap="round" stroke-linejoin="round"><path d="M20 3.5V1.5H2l9 9.5L2 20.5h18v-2" stroke="#333" stroke-width="1.5"/></svg>
<span id="t40" class="t" style="left:1939.70px;top:163.03px;font-size:16.5px;color:#333;font-weight:normal;font-style:normal;font-family:'Liberation Sans', sans-serif;">AutoSumme</span>
<div style="position:absolute;left:2016px;top:107px;width:15px;height:95px;background:#fff;"></div>
<div style="position:absolute;left:1990px;top:107px;width:26px;height:95px;background:#f0f0f0;border-radius:7px;"></div>
<svg style="position:absolute;left:1999px;top:147px;" width="9" height="15" viewBox="0 0 9 15" fill="none" stroke="#333" stroke-width="1.5" stroke-linecap="round" stroke-linejoin="round"><path d="M1.5 1.5L7.5 7.5L1.5 13.5" stroke="#333" stroke-width="1.5"/></svg>
<div style="position:absolute;left:17px;top:217.8px;width:222px;height:36.5px;background:#fff;border-radius:7px;box-shadow:0 0 0 1px #e4e4e4, 0 1px 1px rgba(0,0,0,0.06);"></div>
<span id="t41" class="t" style="left:105.00px;top:227.93px;font-size:18px;color:#3a3a3a;font-weight:normal;font-style:normal;font-family:'Liberation Serif', serif;transform:scaleX(0.8095);">A1</span>
<svg style="position:absolute;left:216px;top:232px;" width="14" height="9" viewBox="0 0 14 9" fill="none" stroke="#333" stroke-width="1.5" stroke-linecap="round" stroke-linejoin="round"><path d="M1 1.5L7 7.5L13 1.5" stroke="#555" stroke-width="1.3"/></svg>
<div style="position:absolute;left:253px;top:217.8px;width:1701px;height:36.5px;background:#fff;border-radius:7px;box-shadow:0 0 0 1px #e4e4e4, 0 1px 1px rgba(0,0,0,0.06);"></div>
<svg style="position:absolute;left:283px;top:226px;" width="22" height="19" viewBox="0 0 22 19" fill="none" stroke="#333" stroke-width="1.5" stroke-linecap="round" stroke-linejoin="round"><circle cx="9.5" cy="8.5" r="7.4" stroke="#444" stroke-width="1.5"/><path d="M7 6.5h5M7 10.5h5" stroke="#444" stroke-width="1.2"/><path d="M15.5 15L19.5 19" stroke="#444" stroke-width="1.5"/></svg>
<span id="t42" class="t" style="left:326.00px;top:225.91px;font-size:21px;color:#444;font-weight:normal;font-style:italic;font-family:'Liberation Serif', serif;transform:scaleX(1.3000);">fx</span>
<div style="position:absolute;left:363.5px;top:226px;width:1px;height:21px;background:#d6d6d6;"></div>
<span id="t43" class="t" style="left:373.80px;top:227.14px;font-size:18.5px;color:#111;font-weight:normal;font-style:normal;font-family:'Liberation Sans', sans-serif;transform:scaleX(1.0042);">Einkommen</span>
<div style="position:absolute;left:44px;top:294px;width:1904px;height:750px;background:#fff;"></div>
<div style="position:absolute;left:44px;top:264px;width:258px;height:30px;background:#dadada;"></div>
<div style="position:absolute;left:0px;top:294px;width:43px;height:32px;background:#dadada;"></div>
<div style="position:absolute;left:301px;top:264px;width:1px;height:30px;background:#d9d9d9;"></div>
<div style="position:absolute;left:559px;top:264px;width:1px;height:30px;background:#d9d9d9;"></div>
<div style="position:absolute;left:817px;top:264px;width:1px;height:30px;background:#d9d9d9;"></div>
<div style="position:absolute;left:1075px;top:264px;width:1px;height:30px;background:#d9d9d9;"></div>
<div style="position:absolute;left:1333px;top:264px;width:1px;height:30px;background:#d9d9d9;"></div>
<div style="position:absolute;left:1591px;top:264px;width:1px;height:30px;background:#d9d9d9;"></div>
<div style="position:absolute;left:1678px;top:264px;width:1px;height:30px;background:#d9d9d9;"></div>
<div style="position:absolute;left:1766px;top:264px;width:1px;height:30px;background:#d9d9d9;"></div>
<div style="position:absolute;left:1854px;top:264px;width:1px;height:30px;background:#d9d9d9;"></div>
<div style="position:absolute;left:1942px;top:264px;width:1px;height:30px;background:#d9d9d9;"></div>
<div style="position:absolute;left:0px;top:293.5px;width:1971px;height:1px;background:#d9d9d9;"></div>
<div style="position:absolute;left:43px;top:264px;width:1px;height:780px;background:#d9d9d9;"></div>
<div style="position:absolute;left:301px;top:294px;width:1px;height:750px;background:#e3e3e3;"></div>
<div style="position:absolute;left:559px;top:294px;width:1px;height:750px;background:#e3e3e3;"></div>
<div style="position:absolute;left:817px;top:294px;width:1px;height:750px;background:#e3e3e3;"></div>
<div style="position:absolute;left:1075px;top:294px;width:1px;height:750px;background:#e3e3e3;"></div>
<div style="position:absolute;left:1333px;top:294px;width:1px;height:750px;background:#e3e3e3;"></div>
<div style="position:absolute;left:1591px;top:294px;width:1px;height:750px;background:#e3e3e3;"></div>
<div style="position:absolute;left:1678px;top:294px;width:1px;height:750px;background:#e3e3e3;"></div>
<div style="position:absolute;left:1766px;top:294px;width:1px;height:750px;background:#e3e3e3;"></div>
<div style="position:absolute;left:1854px;top:294px;width:1px;height:750px;background:#e3e3e3;"></div>
<div style="position:absolute;left:1942px;top:294px;width:1px;height:750px;background:#e3e3e3;"></div>
<div style="position:absolute;left:44px;top:326px;width:1904px;height:1px;background:#e3e3e3;"></div>
<div style="position:absolute;left:0px;top:326px;width:43px;height:1px;background:#d9d9d9;"></div>
<div style="position:absolute;left:44px;top:358px;width:1904px;height:1px;background:#e3e3e3;"></div>
<div style="position:absolute;left:0px;top:358px;width:43px;height:1px;background:#d9d9d9;"></div>
<div style="position:absolute;left:44px;top:390px;width:1904px;height:1px;background:#e3e3e3;"></div>
<div style="position:absolute;left:0px;top:390px;width:43px;height:1px;background:#d9d9d9;"></div>
<div style="position:absolute;left:44px;top:422px;width:1904px;height:1px;background:#e3e3e3;"></div>
<div style="position:absolute;left:0px;top:422px;width:43px;height:1px;background:#d9d9d9;"></div>
<div style="position:absolute;left:44px;top:454px;width:1904px;height:1px;background:#e3e3e3;"></div>
<div style="position:absolute;left:0px;top:454px;width:43px;height:1px;background:#d9d9d9;"></div>
<div style="position:absolute;left:44px;top:486px;width:1904px;height:1px;background:#e3e3e3;"></div>
<div style="position:absolute;left:0px;top:486px;width:43px;height:1px;background:#d9d9d9;"></div>
<div style="position:absolute;left:44px;top:513px;width:1904px;height:1px;background:#e3e3e3;"></div>
<div style="position:absolute;left:0px;top:513px;width:43px;height:1px;background:#d9d9d9;"></div>
<div style="position:absolute;left:44px;top:539px;width:1904px;height:1px;background:#e3e3e3;"></div>
<div style="position:absolute;left:0px;top:539px;width:43px;height:1px;background:#d9d9d9;"></div>
<div style="position:absolute;left:44px;top:566px;width:1904px;height:1px;background:#e3e3e3;"></div>
<div style="position:absolute;left:0px;top:566px;width:43px;height:1px;background:#d9d9d9;"></div>
<div style="position:absolute;left:44px;top:592px;width:1904px;height:1px;background:#e3e3e3;"></div>
<div style="position:absolute;left:0px;top:592px;width:43px;height:1px;background:#d9d9d9;"></div>
<div style="position:absolute;left:44px;top:619px;width:1904px;height:1px;background:#e3e3e3;"></div>
<div style="position:absolute;left:0px;top:619px;width:43px;height:1px;background:#d9d9d9;"></div>
<div style="position:absolute;left:44px;top:645px;width:1904px;height:1px;background:#e3e3e3;"></div>
<div style="position:absolute;left:0px;top:645px;width:43px;height:1px;background:#d9d9d9;"></div>
<div style="position:absolute;left:44px;top:672px;width:1904px;height:1px;background:#e3e3e3;"></div>
<div style="position:absolute;left:0px;top:672px;width:43px;height:1px;background:#d9d9d9;"></div>
<div style="position:absolute;left:44px;top:698px;width:1904px;height:1px;background:#e3e3e3;"></div>
<div style="position:absolute;left:0px;top:698px;width:43px;height:1px;background:#d9d9d9;"></div>
<div style="position:absolute;left:44px;top:725px;width:1904px;height:1px;background:#e3e3e3;"></div>
<div style="position:absolute;left:0px;top:725px;width:43px;height:1px;background:#d9d9d9;"></div>
<div style="position:absolute;left:44px;top:752px;width:1904px;height:1px;background:#e3e3e3;"></div>
<div style="position:absolute;left:0px;top:752px;width:43px;height:1px;background:#d9d9d9;"></div>
<div style="position:absolute;left:44px;top:778px;width:1904px;height:1px;background:#e3e3e3;"></div>
<div style="position:absolute;left:0px;top:778px;width:43px;height:1px;background:#d9d9d9;"></div>
<div style="position:absolute;left:44px;top:805px;width:1904px;height:1px;background:#e3e3e3;"></div>
<div style="position:absolute;left:0px;top:805px;width:43px;height:1px;background:#d9d9d9;"></div>
<div style="position:absolute;left:44px;top:831px;width:1904px;height:1px;background:#e3e3e3;"></div>
<div style="position:absolute;left:0px;top:831px;width:43px;height:1px;background:#d9d9d9;"></div>
<div style="position:absolute;left:44px;top:858px;width:1904px;height:1px;background:#e3e3e3;"></div>
<div style="position:absolute;left:0px;top:858px;width:43px;height:1px;background:#d9d9d9;"></div>
<div style="position:absolute;left:44px;top:884px;width:1904px;height:1px;background:#e3e3e3;"></div>
<div style="position:absolute;left:0px;top:884px;width:43px;height:1px;background:#d9d9d9;"></div>
<div style="position:absolute;left:44px;top:911px;width:1904px;height:1px;background:#e3e3e3;"></div>
<div style="position:absolute;left:0px;top:911px;width:43px;height:1px;background:#d9d9d9;"></div>
<div style="position:absolute;left:44px;top:937px;width:1904px;height:1px;background:#e3e3e3;"></div>
<div style="position:absolute;left:0px;top:937px;width:43px;height:1px;background:#d9d9d9;"></div>
<div style="position:absolute;left:44px;top:964px;width:1904px;height:1px;background:#e3e3e3;"></div>
<div style="position:absolute;left:0px;top:964px;width:43px;height:1px;background:#d9d9d9;"></div>
<div style="position:absolute;left:44px;top:990px;width:1904px;height:1px;background:#e3e3e3;"></div>
<div style="position:absolute;left:0px;top:990px;width:43px;height:1px;background:#d9d9d9;"></div>
<div style="position:absolute;left:44px;top:1017px;width:1904px;height:1px;background:#e3e3e3;"></div>
<div style="position:absolute;left:0px;top:1017px;width:43px;height:1px;background:#d9d9d9;"></div>
<div style="position:absolute;left:44px;top:1044px;width:1904px;height:1px;background:#e3e3e3;"></div>
<div style="position:absolute;left:0px;top:1044px;width:43px;height:1px;background:#d9d9d9;"></div>
<div style="position:absolute;left:44px;top:1070px;width:1904px;height:1px;background:#e3e3e3;"></div>
<div style="position:absolute;left:0px;top:1070px;width:43px;height:1px;background:#d9d9d9;"></div>
<svg style="position:absolute;left:17px;top:275px;" width="11" height="10" viewBox="0 0 11 10" fill="none" stroke="#333" stroke-width="1.5" stroke-linecap="round" stroke-linejoin="round"><path d="M10 1L10 9L1.5 9Z" fill="#8a8a8a" stroke="#8a8a8a" stroke-width="1"/></svg>
<span id="t44" class="t" style="left:168.00px;top:272.19px;font-size:17.5px;color:#1a8a5a;font-weight:normal;font-style:normal;font-family:'Liberation Sans', sans-serif;transform:scaleX(0.9167);">A</span>
<span id="t45" class="t" style="left:425.59px;top:272.19px;font-size:17.5px;color:#555;font-weight:normal;font-style:normal;font-family:'Liberation Sans', sans-serif;transform:scaleX(0.9100);">B</span>
<span id="t46" class="t" style="left:682.09px;top:272.19px;font-size:17.5px;color:#555;font-weight:normal;font-style:normal;font-family:'Liberation Sans', sans-serif;transform:scaleX(0.9091);">C</span>
<span id="t47" class="t" style="left:940.05px;top:272.19px;font-size:17.5px;color:#555;font-weight:normal;font-style:normal;font-family:'Liberation Sans', sans-serif;transform:scaleX(0.9545);">D</span>
<span id="t48" class="t" style="left:1200.20px;top:272.19px;font-size:17.5px;color:#555;font-weight:normal;font-style:normal;font-family:'Liberation Sans', sans-serif;transform:scaleX(0.8000);">E</span>
<span id="t49" class="t" style="left:1896.00px;top:272.19px;font-size:17.5px;color:#555;font-weight:normal;font-style:normal;font-family:'Liberation Sans', sans-serif;transform:scaleX(0.7500);">J</span>
<span id="t50" class="t" style="left:17.00px;top:300.72px;font-size:19px;color:#1a8a5a;font-weight:normal;font-style:normal;font-family:'Liberation Sans', sans-serif;">1</span>
<span id="t51" class="t" style="left:17.00px;top:332.72px;font-size:19px;color:#555;font-weight:normal;font-style:normal;font-family:'Liberation Sans', sans-serif;">2</span>
<span id="t52" class="t" style="left:17.00px;top:364.72px;font-size:19px;color:#555;font-weight:normal;font-style:normal;font-family:'Liberation Sans', sans-serif;">3</span>
<span id="t53" class="t" style="left:18.00px;top:396.72px;font-size:19px;color:#555;font-weight:normal;font-style:normal;font-family:'Liberation Sans', sans-serif;transform:scaleX(0.9000);">4</span>
<span id="t54" class="t" style="left:17.00px;top:428.72px;font-size:19px;color:#555;font-weight:normal;font-style:normal;font-family:'Liberation Sans', sans-serif;">5</span>
<span id="t55" class="t" style="left:17.00px;top:460.72px;font-size:19px;color:#555;font-weight:normal;font-style:normal;font-family:'Liberation Sans', sans-serif;">6</span>
<span id="t56" class="t" style="left:17.00px;top:489.99px;font-size:19px;color:#555;font-weight:normal;font-style:normal;font-family:'Liberation Sans', sans-serif;">7</span>
<span id="t57" class="t" style="left:17.00px;top:516.54px;font-size:19px;color:#555;font-weight:normal;font-style:normal;font-family:'Liberation Sans', sans-serif;">8</span>
<span id="t58" class="t" style="left:17.00px;top:543.09px;font-size:19px;color:#555;font-weight:normal;font-style:normal;font-family:'Liberation Sans', sans-serif;">9</span>
<span id="t59" class="t" style="left:12.32px;top:569.64px;font-size:19px;color:#555;font-weight:normal;font-style:normal;font-family:'Liberation Sans', sans-serif;transform:scaleX(0.9250);">10</span>
<span id="t60" class="t" style="left:12.22px;top:596.19px;font-size:19px;color:#555;font-weight:normal;font-style:normal;font-family:'Liberation Sans', sans-serif;transform:scaleX(1.0278);">11</span>
<span id="t61" class="t" style="left:12.32px;top:622.74px;font-size:19px;color:#555;font-weight:normal;font-style:normal;font-family:'Liberation Sans', sans-serif;transform:scaleX(0.9250);">12</span>
<span id="t62" class="t" style="left:12.32px;top:649.29px;font-size:19px;color:#555;font-weight:normal;font-style:normal;font-family:'Liberation Sans', sans-serif;transform:scaleX(0.9250);">13</span>
<span id="t63" class="t" style="left:12.32px;top:675.84px;font-size:19px;color:#555;font-weight:normal;font-style:normal;font-family:'Liberation Sans', sans-serif;transform:scaleX(0.9250);">14</span>
<span id="t64" class="t" style="left:12.32px;top:702.39px;font-size:19px;color:#555;font-weight:normal;font-style:normal;font-family:'Liberation Sans', sans-serif;transform:scaleX(0.9250);">15</span>
<span id="t65" class="t" style="left:12.32px;top:728.94px;font-size:19px;color:#555;font-weight:normal;font-style:normal;font-family:'Liberation Sans', sans-serif;transform:scaleX(0.9250);">16</span>
<span id="t66" class="t" style="left:12.32px;top:755.49px;font-size:19px;color:#555;font-weight:normal;font-style:normal;font-family:'Liberation Sans', sans-serif;transform:scaleX(0.9250);">17</span>
<span id="t67" class="t" style="left:12.32px;top:782.04px;font-size:19px;color:#555;font-weight:normal;font-style:normal;font-family:'Liberation Sans', sans-serif;transform:scaleX(0.9250);">18</span>
<span id="t68" class="t" style="left:12.32px;top:808.59px;font-size:19px;color:#555;font-weight:normal;font-style:normal;font-family:'Liberation Sans', sans-serif;transform:scaleX(0.9250);">19</span>
<span id="t69" class="t" style="left:12.32px;top:835.14px;font-size:19px;color:#555;font-weight:normal;font-style:normal;font-family:'Liberation Sans', sans-serif;transform:scaleX(0.9250);">20</span>
<span id="t70" class="t" style="left:12.32px;top:861.69px;font-size:19px;color:#555;font-weight:normal;font-style:normal;font-family:'Liberation Sans', sans-serif;transform:scaleX(0.9250);">21</span>
<span id="t71" class="t" style="left:12.32px;top:888.24px;font-size:19px;color:#555;font-weight:normal;font-style:normal;font-family:'Liberation Sans', sans-serif;transform:scaleX(0.9250);">22</span>
<span id="t72" class="t" style="left:12.32px;top:914.79px;font-size:19px;color:#555;font-weight:normal;font-style:normal;font-family:'Liberation Sans', sans-serif;transform:scaleX(0.9250);">23</span>
<span id="t73" class="t" style="left:12.32px;top:941.34px;font-size:19px;color:#555;font-weight:normal;font-style:normal;font-family:'Liberation Sans', sans-serif;transform:scaleX(0.9250);">24</span>
<span id="t74" class="t" style="left:12.32px;top:967.89px;font-size:19px;color:#555;font-weight:normal;font-style:normal;font-family:'Liberation Sans', sans-serif;transform:scaleX(0.9250);">25</span>
<span id="t75" class="t" style="left:12.32px;top:994.44px;font-size:19px;color:#555;font-weight:normal;font-style:normal;font-family:'Liberation Sans', sans-serif;transform:scaleX(0.9250);">26</span>
<span id="t76" class="t" style="left:12.32px;top:1020.99px;font-size:19px;color:#555;font-weight:normal;font-style:normal;font-family:'Liberation Sans', sans-serif;transform:scaleX(0.9250);">27</span>
<span id="t77" class="t" style="left:47.47px;top:300.80px;font-size:21.5px;color:#000;font-weight:normal;font-style:normal;font-family:'Liberation Sans', sans-serif;transform:scaleX(1.0315);">Einkommen</span>
<span id="t78" class="t" style="left:305.40px;top:300.80px;font-size:21.5px;color:#000;font-weight:normal;font-style:normal;font-family:'Liberation Sans', sans-serif;">Kinder zu Hause</span>
<span id="t79" class="t" style="left:564.30px;top:300.80px;font-size:21.5px;color:#000;font-weight:normal;font-style:normal;font-family:'Liberation Sans', sans-serif;transform:scaleX(0.9968);">Teenager zu Hause</span>
<span id="t80" class="t" style="left:821.09px;top:300.80px;font-size:21.5px;color:#000;font-weight:normal;font-style:normal;font-family:'Liberation Sans', sans-serif;transform:scaleX(1.0121);">Letzte Transaktion</span>
<span id="t81" class="t" style="left:1079.17px;top:300.80px;font-size:21.5px;color:#000;font-weight:normal;font-style:normal;font-family:'Liberation Sans', sans-serif;transform:scaleX(1.0314);">Betrag für Weine</span>
<span id="t82" class="t" style="left:236.79px;top:332.80px;font-size:21.5px;color:#000;font-weight:normal;font-style:normal;font-family:'Liberation Sans', sans-serif;transform:scaleX(1.0086);">58138</span>
<span id="t83" class="t" style="left:542.70px;top:332.80px;font-size:21.5px;color:#000;font-weight:normal;font-style:normal;font-family:'Liberation Sans', sans-serif;">0</span>
<span id="t84" class="t" style="left:800.60px;top:332.80px;font-size:21.5px;color:#000;font-weight:normal;font-style:normal;font-family:'Liberation Sans', sans-serif;">0</span>
<span id="t85" class="t" style="left:1046.55px;top:332.80px;font-size:21.5px;color:#000;font-weight:normal;font-style:normal;font-family:'Liberation Sans', sans-serif;transform:scaleX(1.0455);">58</span>
<span id="t86" class="t" style="left:237.80px;top:364.80px;font-size:21.5px;color:#000;font-weight:normal;font-style:normal;font-family:'Liberation Sans', sans-serif;transform:scaleX(0.9915);">46344</span>
<span id="t87" class="t" style="left:546.12px;top:364.80px;font-size:21.5px;color:#000;font-weight:normal;font-style:normal;font-family:'Liberation Sans', sans-serif;transform:scaleX(0.7800);">1</span>
<span id="t88" class="t" style="left:804.02px;top:364.80px;font-size:21.5px;color:#000;font-weight:normal;font-style:normal;font-family:'Liberation Sans', sans-serif;transform:scaleX(0.7800);">1</span>
<span id="t89" class="t" style="left:1046.55px;top:364.80px;font-size:21.5px;color:#000;font-weight:normal;font-style:normal;font-family:'Liberation Sans', sans-serif;transform:scaleX(1.0455);">38</span>
<span id="t90" class="t" style="left:236.79px;top:396.80px;font-size:21.5px;color:#000;font-weight:normal;font-style:normal;font-family:'Liberation Sans', sans-serif;transform:scaleX(1.0086);">71613</span>
<span id="t91" class="t" style="left:542.70px;top:396.80px;font-size:21.5px;color:#000;font-weight:normal;font-style:normal;font-family:'Liberation Sans', sans-serif;">0</span>
<span id="t92" class="t" style="left:800.60px;top:396.80px;font-size:21.5px;color:#000;font-weight:normal;font-style:normal;font-family:'Liberation Sans', sans-serif;">0</span>
<span id="t93" class="t" style="left:1046.55px;top:396.80px;font-size:21.5px;color:#000;font-weight:normal;font-style:normal;font-family:'Liberation Sans', sans-serif;transform:scaleX(1.0455);">26</span>
<span id="t94" class="t" style="left:236.79px;top:428.80px;font-size:21.5px;color:#000;font-weight:normal;font-style:normal;font-family:'Liberation Sans', sans-serif;transform:scaleX(1.0086);">26646</span>
<span id="t95" class="t" style="left:546.12px;top:428.80px;font-size:21.5px;color:#000;font-weight:normal;font-style:normal;font-family:'Liberation Sans', sans-serif;transform:scaleX(0.7800);">1</span>
<span id="t96" class="t" style="left:800.60px;top:428.80px;font-size:21.5px;color:#000;font-weight:normal;font-style:normal;font-family:'Liberation Sans', sans-serif;">0</span>
<span id="t97" class="t" style="left:1046.55px;top:428.80px;font-size:21.5px;color:#000;font-weight:normal;font-style:normal;font-family:'Liberation Sans', sans-serif;transform:scaleX(1.0455);">26</span>
<span id="t98" class="t" style="left:236.79px;top:460.80px;font-size:21.5px;color:#000;font-weight:normal;font-style:normal;font-family:'Liberation Sans', sans-serif;transform:scaleX(1.0086);">58293</span>
<span id="t99" class="t" style="left:546.12px;top:460.80px;font-size:21.5px;color:#000;font-weight:normal;font-style:normal;font-family:'Liberation Sans', sans-serif;transform:scaleX(0.7800);">1</span>
<span id="t100" class="t" style="left:800.60px;top:460.80px;font-size:21.5px;color:#000;font-weight:normal;font-style:normal;font-family:'Liberation Sans', sans-serif;">0</span>
<span id="t101" class="t" style="left:1046.60px;top:460.80px;font-size:21.5px;color:#000;font-weight:normal;font-style:normal;font-family:'Liberation Sans', sans-serif;">94</span>
<div style="position:absolute;left:42px;top:293px;width:261px;height:35px;border:3px solid #2f8a14;box-sizing:border-box;"></div>
<div style="position:absolute;left:299px;top:324px;width:5px;height:4.5px;background:#2f8a14;outline:1px solid #fff;"></div>
<div style="position:absolute;left:1948px;top:294px;width:23px;height:750px;background:#eeeeee;"></div>
<div style="position:absolute;left:1955px;top:304px;width:11px;height:1.5px;background:#999;"></div>
<svg style="position:absolute;left:1956px;top:317px;" width="9" height="8" viewBox="0 0 9 8" fill="none" stroke="#333" stroke-width="1.5" stroke-linecap="round" stroke-linejoin="round"><path d="M4.5 1L8.5 7H0.5Z" fill="#777" stroke="none"/></svg>
<div style="position:absolute;left:1955px;top:337px;width:11px;height:720px;background:#d3d3d3;border-radius:5.5px;"></div>
<div style="position:absolute;left:1971px;top:0px;width:77px;height:1044px;background:transparent;"></div>
<div style="position:absolute;left:1971px;top:209px;width:77px;height:835px;background:#ededed;"></div>
<div style="position:absolute;left:1971px;top:209px;width:1px;height:835px;background:#d6d6d6;"></div>
<div style="position:absolute;left:2001px;top:240px;width:19px;height:2px;background:#888;"></div>
<svg style="position:absolute;left:1998px;top:273px;" width="25" height="25" viewBox="0 0 25 25" fill="none" stroke="#333" stroke-width="1.5" stroke-linecap="round" stroke-linejoin="round"><path d="M2 2L22 8.5L14 11.5L21 18.5L18.5 21L11.5 14L8.5 22Z" stroke="#333" stroke-width="1.6"/></svg>
<svg style="position:absolute;left:1999px;top:328px;" width="24" height="25" viewBox="0 0 24 25" fill="none" stroke="#333" stroke-width="1.5" stroke-linecap="round" stroke-linejoin="round"><path d="M2 5v19 M2 1.5v1 M7 1.5h15.5 M21 5v10.5a2 2 0 0 1-2 2H5.5 M8.5 14.5L5.5 17.5L8.5 20.5 M18 7.5L21 4.5L24 7.5" stroke="#aaa" stroke-width="1.4"/></svg>
<svg style="position:absolute;left:1999px;top:385px;" width="24" height="22" viewBox="0 0 24 22" fill="none" stroke="#333" stroke-width="1.5" stroke-linecap="round" stroke-linejoin="round"><path d="M1 5.5h5M11 5.5h12 M1 16.5h12M18 16.5h5" stroke="#aaa" stroke-width="1.4"/><circle cx="8.5" cy="5.5" r="3" stroke="#aaa" stroke-width="1.4"/><circle cx="15.5" cy="16.5" r="3" stroke="#aaa" stroke-width="1.4"/></svg>
<svg style="position:absolute;left:1998px;top:438px;" width="24" height="24" viewBox="0 0 24 24" fill="none" stroke="#333" stroke-width="1.5" stroke-linecap="round" stroke-linejoin="round"><path d="M4 8.5A9.5 9.5 0 1 1 2.5 12 M4 3v5.5h5.5" stroke="#333" stroke-width="1.5"/><path d="M12 6.5V12l4 4" stroke="#333" stroke-width="1.5"/></svg>
<svg style="position:absolute;left:1998px;top:493px;" width="25" height="25" viewBox="0 0 25 25" fill="none" stroke="#333" stroke-width="1.5" stroke-linecap="round" stroke-linejoin="round"><circle cx="12.5" cy="12.5" r="11" stroke="#333" stroke-width="1.5"/><path d="M9 9.5a3.5 3.5 0 1 1 5 3.2c-1 .5-1.5 1.3-1.5 2.3v.8" stroke="#333" stroke-width="1.5"/><circle cx="12.5" cy="18.7" r="0.9" fill="#333" stroke="none"/></svg>
<div style="position:absolute;left:2001px;top:556px;width:4px;height:4px;border:1.4px solid #444;border-radius:50%;"></div>
<div style="position:absolute;left:2008.5px;top:556px;width:4px;height:4px;border:1.4px solid #444;border-radius:50%;"></div>
<div style="position:absolute;left:2016px;top:556px;width:4px;height:4px;border:1.4px solid #444;border-radius:50%;"></div>
<div style="position:absolute;left:-20px;top:764px;width:23.5px;height:91px;background:#fafafa;border-radius:8px;box-shadow:0 0 3px rgba(0,0,0,0.15);"></div>
<div style="position:absolute;left:3px;top:909px;width:10px;height:69px;border:2px solid #666;border-radius:6px;box-sizing:border-box;background:rgba(255,255,255,0.3);"></div>
<div style="position:absolute;left:5.5px;top:944px;width:5px;height:31px;background:linear-gradient(#6ab4ff,#2a7ef5);border-radius:3px;"></div>
<div style="position:absolute;left:1270.5px;top:192.5px;width:610px;height:835.5px;background:#fff;border-radius:9px;box-shadow:0 2px 8px rgba(0,0,0,0.16), 0 0 0 1px rgba(0,0,0,0.05);"></div>
<div style="position:absolute;left:1280.6px;top:203px;width:590.4px;height:24.5px;background:#f2f3f5;"></div>
<span id="t102" class="t" style="left:1291.52px;top:207.63px;font-size:16.5px;color:#555a66;font-weight:normal;font-style:normal;font-family:'Liberation Sans', sans-serif;transform:scaleX(0.9786);">Gut, Schlecht und Neutral</span>
<div style="position:absolute;left:1280.6px;top:277px;width:590.4px;height:24.5px;background:#f2f3f5;"></div>
<span id="t103" class="t" style="left:1291.49px;top:281.63px;font-size:16.5px;color:#555a66;font-weight:normal;font-style:normal;font-family:'Liberation Sans', sans-serif;transform:scaleX(1.0141);">Daten und Modell</span>
<div style="position:absolute;left:1280.6px;top:428.3px;width:590.4px;height:24.0px;background:#f2f3f5;"></div>
<span id="t104" class="t" style="left:1292.50px;top:432.93px;font-size:16.5px;color:#555a66;font-weight:normal;font-style:normal;font-family:'Liberation Sans', sans-serif;transform:scaleX(0.9333);">Titel</span>
<div style="position:absolute;left:1280.6px;top:540.6px;width:590.4px;height:24.399999999999977px;background:#f2f3f5;"></div>
<span id="t105" class="t" style="left:1292.50px;top:545.23px;font-size:16.5px;color:#555a66;font-weight:normal;font-style:normal;font-family:'Liberation Sans', sans-serif;">Zellformatvorlagen mit Designs</span>
<div style="position:absolute;left:1280.6px;top:807px;width:590.4px;height:24.299999999999955px;background:#f2f3f5;"></div>
<span id="t106" class="t" style="left:1292.50px;top:811.63px;font-size:16.5px;color:#555a66;font-weight:normal;font-style:normal;font-family:'Liberation Sans', sans-serif;transform:scaleX(0.9898);">Zahlenformat</span>
<div style="position:absolute;left:1287px;top:233.5px;width:135.5px;height:31px;border:1.5px solid #d5dae0;border-bottom:none;border-radius:4px 4px 0 0;box-sizing:border-box;background:#fff;"></div>
<span id="t107" class="t" style="left:1293.61px;top:241.66px;font-size:18px;color:#000;font-weight:normal;font-style:normal;font-family:'Liberation Sans', sans-serif;transform:scaleX(1.0875);">Normal</span>
<div style="position:absolute;left:1433px;top:235px;width:134px;height:29px;background:#c6efce;"></div>
<span id="t108" class="t" style="left:1438.93px;top:241.66px;font-size:18px;color:#006100;font-weight:normal;font-style:normal;font-family:'Liberation Sans', sans-serif;transform:scaleX(1.0714);">Gut</span>
<div style="position:absolute;left:1578.6px;top:235px;width:133.6px;height:29.3px;background:#ffc7ce;"></div>
<span id="t109" class="t" style="left:1584.33px;top:241.66px;font-size:18px;color:#9c0006;font-weight:normal;font-style:normal;font-family:'Liberation Sans', sans-serif;transform:scaleX(0.9655);">Schle...</span>
<div style="position:absolute;left:1724.2px;top:235px;width:133.6px;height:29.3px;background:#ffeb9c;"></div>
<span id="t110" class="t" style="left:1729.91px;top:241.66px;font-size:18px;color:#9c5700;font-weight:normal;font-style:normal;font-family:'Liberation Sans', sans-serif;transform:scaleX(1.0946);">Neutral</span>
<span id="t111" class="t" style="left:1293.63px;top:315.76px;font-size:18px;color:#0000ff;font-weight:normal;font-style:normal;font-family:'Liberation Sans', sans-serif;transform:scaleX(1.0667);text-decoration:underline;">Hyper...</span>
<span id="t112" class="t" style="left:1439.01px;top:315.76px;font-size:18px;color:#800080;font-weight:normal;font-style:normal;font-family:'Liberation Sans', sans-serif;transform:scaleX(0.9921);text-decoration:underline;">Besuc...</span>
<div style="position:absolute;left:1578px;top:308.3px;width:134px;height:29.7px;background:#ffffcc;border:1px solid #b2b2b2;box-sizing:border-box;"></div>
<span id="t113" class="t" style="left:1585.27px;top:315.76px;font-size:18px;color:#000;font-weight:normal;font-style:normal;font-family:'Liberation Sans', sans-serif;transform:scaleX(1.0290);">Hinweis</span>
<span id="t114" class="t" style="left:1731.00px;top:315.76px;font-size:18px;color:#ff0000;font-weight:normal;font-style:normal;font-family:'Liberation Sans', sans-serif;transform:scaleX(1.0536);">Warn...</span>
<div style="position:absolute;left:1287px;top:347px;width:134.6px;height:29.8px;background:#ffcc99;border:1px solid #7f7f7f;box-sizing:border-box;"></div>
<span id="t115" class="t" style="left:1294.11px;top:354.76px;font-size:18px;color:#3f3f76;font-weight:normal;font-style:normal;font-family:'Liberation Sans', sans-serif;transform:scaleX(0.9877);">Eingabe</span>
<div style="position:absolute;left:1432px;top:347px;width:134.8px;height:29.8px;background:#f2f2f2;border:1.5px solid #3f3f3f;box-sizing:border-box;"></div>
<span id="t116" class="t" style="left:1440.20px;top:354.76px;font-size:18px;color:#3f3f3f;font-weight:bold;font-style:normal;font-family:'Liberation Sans', sans-serif;transform:scaleX(0.9159);">Ausga...</span>
<div style="position:absolute;left:1578px;top:347px;width:134px;height:29.8px;background:#f2f2f2;border:1px solid #7f7f7f;box-sizing:border-box;"></div>
<span id="t117" class="t" style="left:1584.76px;top:354.76px;font-size:18px;color:#fa7d00;font-weight:bold;font-style:normal;font-family:'Liberation Sans', sans-serif;transform:scaleX(0.9429);">Berec...</span>
<div style="position:absolute;left:1724.5px;top:347.5px;width:133px;height:29.5px;background:#a5a5a5;border:1.2px solid #4a4a4a;border-right-width:1.6px;border-bottom-width:1.6px;box-sizing:border-box;box-shadow:1px 1px 0 0.2px #777;"></div>
<span id="t118" class="t" style="left:1731.00px;top:354.76px;font-size:18px;color:#ffffff;font-weight:bold;font-style:normal;font-family:'Liberation Sans', sans-serif;transform:scaleX(0.9500);">Zelle ...</span>
<span id="t119" class="t" style="left:1294.20px;top:393.26px;font-size:18px;color:#fa7d00;font-weight:normal;font-style:normal;font-family:'Liberation Sans', sans-serif;transform:scaleX(1.0217);">Verkn...</span>
<div style="position:absolute;left:1287px;top:413px;width:134.6px;height:3px;border-top:1px solid #ff8001;border-bottom:1px solid #ff8001;box-sizing:border-box;"></div>
<span id="t120" class="t" style="left:1439.23px;top:393.26px;font-size:18px;color:#7f7f7f;font-weight:normal;font-style:italic;font-family:'Liberation Sans', sans-serif;transform:scaleX(0.9667);">CExpl...</span>
<span id="t121" class="t" style="left:1296.00px;top:461.43px;font-size:29.5px;color:#44546a;font-weight:bold;font-style:normal;font-family:'Liberation Sans', sans-serif;transform:scaleX(1.0085);">Titel</span>
<span id="t122" class="t" style="left:1440.31px;top:463.88px;font-size:24px;color:#44546a;font-weight:bold;font-style:normal;font-family:'Liberation Sans', sans-serif;transform:scaleX(0.9895);">Übers...</span>
<div style="position:absolute;left:1432px;top:487.3px;width:134.8px;height:2.2px;background:#5b9bd5;"></div>
<span id="t123" class="t" style="left:1586.21px;top:465.25px;font-size:20.5px;color:#44546a;font-weight:bold;font-style:normal;font-family:'Liberation Sans', sans-serif;transform:scaleX(0.9932);">Übers...</span>
<div style="position:absolute;left:1578px;top:487.5px;width:134px;height:2px;background:#6aa3d9;"></div>
<span id="t124" class="t" style="left:1730.03px;top:466.76px;font-size:18px;color:#44546a;font-weight:bold;font-style:normal;font-family:'Liberation Sans', sans-serif;transform:scaleX(0.9719);">Übers...</span>
<div style="position:absolute;left:1724px;top:487.8px;width:134px;height:1.5px;background:#a9c9e9;"></div>
<span id="t125" class="t" style="left:1294.03px;top:504.96px;font-size:18px;color:#44546a;font-weight:bold;font-style:normal;font-family:'Liberation Sans', sans-serif;transform:scaleX(0.9750);">Übers...</span>
<div style="position:absolute;left:1432px;top:497px;width:134.8px;height:1.5px;background:#8fb8e2;"></div>
<span id="t126" class="t" style="left:1440.20px;top:504.96px;font-size:18px;color:#000;font-weight:bold;font-style:normal;font-family:'Liberation Sans', sans-serif;transform:scaleX(0.9667);">Gesamt</span>
<div style="position:absolute;left:1432px;top:525.8px;width:134.8px;height:3.2px;border-top:1px solid #7aaee0;border-bottom:1px solid #7aaee0;box-sizing:border-box;"></div>
<div style="position:absolute;left:1288px;top:572.6px;width:133.2px;height:29.2px;background:#5b9bd5;"></div>
<div style="position:absolute;left:1433.2px;top:572.6px;width:133.8px;height:29.2px;background:#ddebf7;"></div>
<div style="position:absolute;left:1578.6px;top:572.6px;width:133.6px;height:29.2px;background:#bdd7ee;"></div>
<div style="position:absolute;left:1724.2px;top:572.6px;width:133.6px;height:29.2px;background:#9bc2e6;"></div>
<span id="t127" class="t" style="left:1294.50px;top:579.26px;font-size:18px;color:#ffffff;font-weight:normal;font-style:normal;font-family:'Liberation Sans', sans-serif;transform:scaleX(0.9891);">Akzen...</span>
<span id="t128" class="t" style="left:1439.02px;top:579.26px;font-size:18px;color:#000;font-weight:normal;font-style:normal;font-family:'Liberation Sans', sans-serif;transform:scaleX(0.9800);">20%-...</span>
<span id="t129" class="t" style="left:1585.30px;top:579.26px;font-size:18px;color:#000;font-weight:normal;font-style:normal;font-family:'Liberation Sans', sans-serif;transform:scaleX(0.9589);">40%-...</span>
<span id="t130" class="t" style="left:1730.03px;top:579.26px;font-size:18px;color:#ffffff;font-weight:normal;font-style:normal;font-family:'Liberation Sans', sans-serif;transform:scaleX(0.9745);">60%-...</span>
<div style="position:absolute;left:1288px;top:611.0px;width:133.2px;height:29.2px;background:#ed7d31;"></div>
<div style="position:absolute;left:1433.2px;top:611.0px;width:133.8px;height:29.2px;background:#fce4d6;"></div>
<div style="position:absolute;left:1578.6px;top:611.0px;width:133.6px;height:29.2px;background:#f8cbad;"></div>
<div style="position:absolute;left:1724.2px;top:611.0px;width:133.6px;height:29.2px;background:#f4b084;"></div>
<span id="t131" class="t" style="left:1294.50px;top:617.66px;font-size:18px;color:#ffffff;font-weight:normal;font-style:normal;font-family:'Liberation Sans', sans-serif;transform:scaleX(0.9891);">Akzen...</span>
<span id="t132" class="t" style="left:1439.02px;top:617.66px;font-size:18px;color:#000;font-weight:normal;font-style:normal;font-family:'Liberation Sans', sans-serif;transform:scaleX(0.9800);">20%-...</span>
<span id="t133" class="t" style="left:1585.30px;top:617.66px;font-size:18px;color:#000;font-weight:normal;font-style:normal;font-family:'Liberation Sans', sans-serif;transform:scaleX(0.9589);">40%-...</span>
<span id="t134" class="t" style="left:1730.03px;top:617.66px;font-size:18px;color:#ffffff;font-weight:normal;font-style:normal;font-family:'Liberation Sans', sans-serif;transform:scaleX(0.9745);">60%-...</span>
<div style="position:absolute;left:1288px;top:649.4px;width:133.2px;height:29.2px;background:#a5a5a5;"></div>
<div style="position:absolute;left:1433.2px;top:649.4px;width:133.8px;height:29.2px;background:#ededed;"></div>
<div style="position:absolute;left:1578.6px;top:649.4px;width:133.6px;height:29.2px;background:#dbdbdb;"></div>
<div style="position:absolute;left:1724.2px;top:649.4px;width:133.6px;height:29.2px;background:#c9c9c9;"></div>
<span id="t135" class="t" style="left:1294.50px;top:656.06px;font-size:18px;color:#ffffff;font-weight:normal;font-style:normal;font-family:'Liberation Sans', sans-serif;transform:scaleX(0.9891);">Akzen...</span>
<span id="t136" class="t" style="left:1439.02px;top:656.06px;font-size:18px;color:#000;font-weight:normal;font-style:normal;font-family:'Liberation Sans', sans-serif;transform:scaleX(0.9800);">20%-...</span>
<span id="t137" class="t" style="left:1585.30px;top:656.06px;font-size:18px;color:#000;font-weight:normal;font-style:normal;font-family:'Liberation Sans', sans-serif;transform:scaleX(0.9589);">40%-...</span>
<span id="t138" class="t" style="left:1730.03px;top:656.06px;font-size:18px;color:#ffffff;font-weight:normal;font-style:normal;font-family:'Liberation Sans', sans-serif;transform:scaleX(0.9745);">60%-...</span>
<div style="position:absolute;left:1288px;top:687.8px;width:133.2px;height:29.2px;background:#ffc000;"></div>
<div style="position:absolute;left:1433.2px;top:687.8px;width:133.8px;height:29.2px;background:#fff2cc;"></div>
<div style="position:absolute;left:1578.6px;top:687.8px;width:133.6px;height:29.2px;background:#ffe699;"></div>
<div style="position:absolute;left:1724.2px;top:687.8px;width:133.6px;height:29.2px;background:#ffd966;"></div>
<span id="t139" class="t" style="left:1294.50px;top:694.46px;font-size:18px;color:#ffffff;font-weight:normal;font-style:normal;font-family:'Liberation Sans', sans-serif;transform:scaleX(0.9891);">Akzen...</span>
<span id="t140" class="t" style="left:1439.02px;top:694.46px;font-size:18px;color:#000;font-weight:normal;font-style:normal;font-family:'Liberation Sans', sans-serif;transform:scaleX(0.9800);">20%-...</span>
<span id="t141" class="t" style="left:1585.30px;top:694.46px;font-size:18px;color:#000;font-weight:normal;font-style:normal;font-family:'Liberation Sans', sans-serif;transform:scaleX(0.9589);">40%-...</span>
<span id="t142" class="t" style="left:1730.03px;top:694.46px;font-size:18px;color:#ffffff;font-weight:normal;font-style:normal;font-family:'Liberation Sans', sans-serif;transform:scaleX(0.9745);">60%-...</span>
<div style="position:absolute;left:1288px;top:726.2px;width:133.2px;height:29.2px;background:#4472c4;"></div>
<div style="position:absolute;left:1433.2px;top:726.2px;width:133.8px;height:29.2px;background:#d9e1f2;"></div>
<div style="position:absolute;left:1578.6px;top:726.2px;width:133.6px;height:29.2px;background:#b4c6e7;"></div>
<div style="position:absolute;left:1724.2px;top:726.2px;width:133.6px;height:29.2px;background:#8ea9db;"></div>
<span id="t143" class="t" style="left:1294.50px;top:732.86px;font-size:18px;color:#ffffff;font-weight:normal;font-style:normal;font-family:'Liberation Sans', sans-serif;transform:scaleX(0.9891);">Akzen...</span>
<span id="t144" class="t" style="left:1439.02px;top:732.86px;font-size:18px;color:#000;font-weight:normal;font-style:normal;font-family:'Liberation Sans', sans-serif;transform:scaleX(0.9800);">20%-...</span>
<span id="t145" class="t" style="left:1585.30px;top:732.86px;font-size:18px;color:#000;font-weight:normal;font-style:normal;font-family:'Liberation Sans', sans-serif;transform:scaleX(0.9589);">40%-...</span>
<span id="t146" class="t" style="left:1730.03px;top:732.86px;font-size:18px;color:#ffffff;font-weight:normal;font-style:normal;font-family:'Liberation Sans', sans-serif;transform:scaleX(0.9745);">60%-...</span>
<div style="position:absolute;left:1288px;top:764.6px;width:133.2px;height:29.2px;background:#70ad47;"></div>
<div style="position:absolute;left:1433.2px;top:764.6px;width:133.8px;height:29.2px;background:#e2efda;"></div>
<div style="position:absolute;left:1578.6px;top:764.6px;width:133.6px;height:29.2px;background:#c6e0b4;"></div>
<div style="position:absolute;left:1724.2px;top:764.6px;width:133.6px;height:29.2px;background:#a9d08e;"></div>
<span id="t147" class="t" style="left:1294.50px;top:771.26px;font-size:18px;color:#ffffff;font-weight:normal;font-style:normal;font-family:'Liberation Sans', sans-serif;transform:scaleX(0.9891);">Akzen...</span>
<span id="t148" class="t" style="left:1439.02px;top:771.26px;font-size:18px;color:#000;font-weight:normal;font-style:normal;font-family:'Liberation Sans', sans-serif;transform:scaleX(0.9800);">20%-...</span>
<span id="t149" class="t" style="left:1585.30px;top:771.26px;font-size:18px;color:#000;font-weight:normal;font-style:normal;font-family:'Liberation Sans', sans-serif;transform:scaleX(0.9589);">40%-...</span>
<span id="t150" class="t" style="left:1730.03px;top:771.26px;font-size:18px;color:#ffffff;font-weight:normal;font-style:normal;font-family:'Liberation Sans', sans-serif;transform:scaleX(0.9745);">60%-...</span>
<span id="t151" class="t" style="left:1293.77px;top:845.76px;font-size:18px;color:#000;font-weight:normal;font-style:normal;font-family:'Liberation Sans', sans-serif;transform:scaleX(1.0328);">Komma</span>
<span id="t152" class="t" style="left:1440.10px;top:845.76px;font-size:18px;color:#000;font-weight:normal;font-style:normal;font-family:'Liberation Sans', sans-serif;transform:scaleX(1.0764);">Währung</span>
<span id="t153" class="t" style="left:1584.46px;top:845.76px;font-size:18px;color:#000;font-weight:normal;font-style:normal;font-family:'Liberation Sans', sans-serif;transform:scaleX(1.0410);">Prozent</span>
<span id="t154" class="t" style="left:1729.73px;top:845.76px;font-size:18px;color:#000;font-weight:normal;font-style:normal;font-family:'Liberation Sans', sans-serif;transform:scaleX(1.0713);">Komma[0]</span>
<span id="t155" class="t" style="left:1294.80px;top:884.26px;font-size:18px;color:#000;font-weight:normal;font-style:normal;font-family:'Liberation Sans', sans-serif;transform:scaleX(1.0783);">Währung[0]</span>
<div style="position:absolute;left:1292px;top:918.5px;width:567px;height:1px;background:#e6e6e6;"></div>
<span id="t156" class="t" style="left:1290.82px;top:938.43px;font-size:16.5px;color:#333;font-weight:normal;font-style:normal;font-family:'Liberation Sans', sans-serif;transform:scaleX(0.9836);">Neue Zellenformatvorlage...</span>
<span id="t157" class="t" style="left:1290.81px;top:988.43px;font-size:16.5px;color:#333;font-weight:normal;font-style:normal;font-family:'Liberation Sans', sans-serif;transform:scaleX(0.9853);">Formatvorlagen zusammenführen...</span>
</body></html>
